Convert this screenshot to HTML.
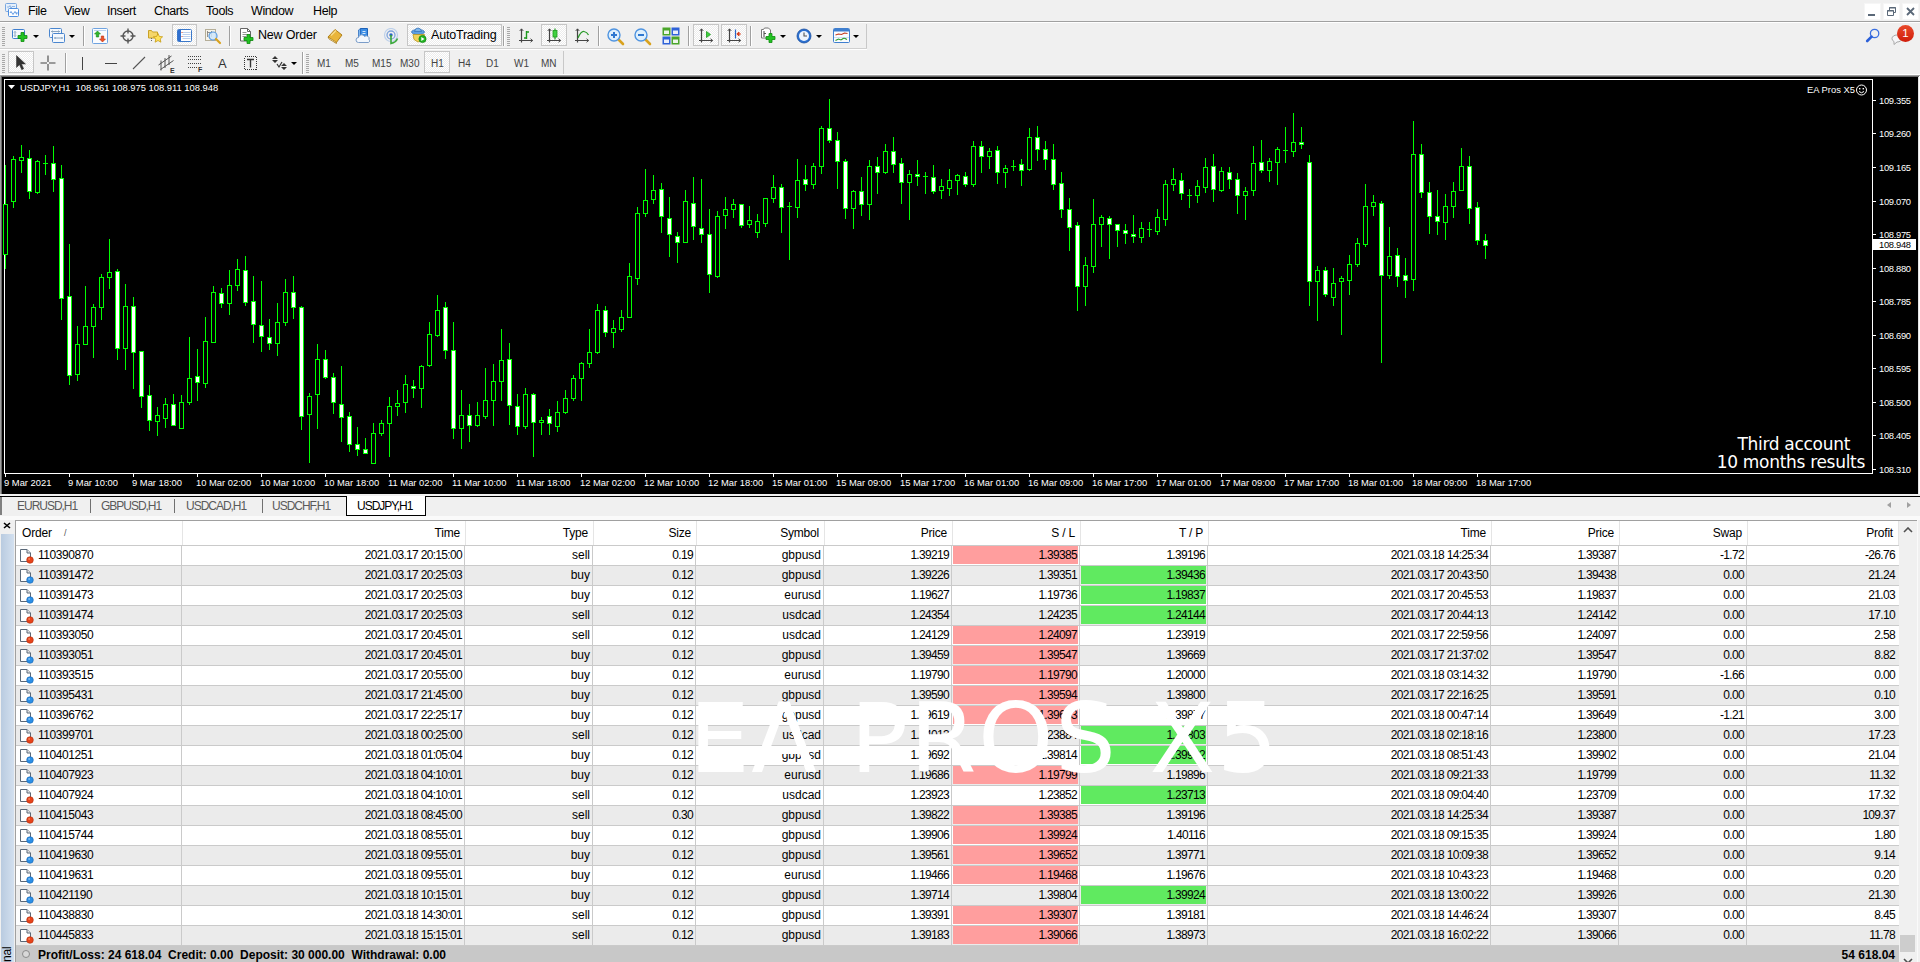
<!DOCTYPE html><html><head><meta charset="utf-8"><title>MT4</title><style>
*{box-sizing:border-box;margin:0;padding:0}
html,body{width:1920px;height:962px;overflow:hidden;background:#f0f0f0}
body{position:relative;font-family:"Liberation Sans",sans-serif;font-size:12px;color:#000}
.abs{position:absolute}
#menu{position:absolute;left:0;top:0;width:1920px;height:22px;background:#f0f0f0}
#menu span{position:absolute;top:4px;font-size:12.5px;letter-spacing:-0.4px;line-height:15px;white-space:nowrap}
.hl{position:absolute;left:0;width:1920px;height:1px}
.vsep{position:absolute;width:1px;background:#a0a0a0}
.grip{position:absolute;width:3px;height:19px;background:repeating-linear-gradient(to bottom,#a8a8a8 0,#a8a8a8 1px,transparent 1px,transparent 2px)}
.pressed{position:absolute;border:1px solid #c6c6c6;background-color:#f8f8f8;background-image:repeating-conic-gradient(#fff 0 25%,#ececec 0 50%);background-size:2px 2px}
.tbtxt{position:absolute;font-size:12.5px;letter-spacing:-0.2px;white-space:nowrap;line-height:15px}
.tf{position:absolute;top:58px;font-size:10px;color:#444;letter-spacing:0;white-space:nowrap;line-height:12px}
.dd{position:absolute;width:0;height:0;border-left:3px solid transparent;border-right:3px solid transparent;border-top:3px solid #000}
#chart{position:absolute;left:2px;top:77px;width:1916px;height:417px;background:#000}
#tabs{position:absolute;left:0;top:495px;width:1920px;height:25px;background:#f0f0f0}
.tab{position:absolute;top:4px;font-size:12px;letter-spacing:-1.02px;color:#5a5a5a;white-space:nowrap;line-height:14px}
#tbl{position:absolute;left:15px;top:520px;width:1884px;height:442px;background:#fff;border-left:1px solid #a0a0a0;border-top:1px solid #a0a0a0;overflow:hidden}
.row{position:absolute;left:0;width:1883px;height:20px;border-bottom:1px solid #cacaca}
.row.alt{background:#ebebeb}
.c{position:absolute;top:0;height:19px;line-height:18px;font-size:12px;letter-spacing:-0.68px;text-align:right;padding-right:2px;white-space:nowrap;border-right:1px solid #cacaca}
.c.t{letter-spacing:0}
.hd .c{height:24px;line-height:25px;padding-right:5px;letter-spacing:-0.2px;border-right:1px solid #e5e5e5}
.red{background:#ff9e9e;box-shadow:inset 0 0 0 1px #fff0}
.grn{background:#60ea60}
</style></head><body>
<div id="menu">
<div class="abs" style="left:4px;top:2px;width:16px;height:16px"><svg width="16" height="16" viewBox="0 0 16 16"><rect x="1.5" y="1.5" width="11" height="8" rx="1" fill="#e6f0fb" stroke="#7aa7df"/><path d="M3 5h2l1-1.500 1 3 1-2h3" stroke="#7aa7df" fill="none" stroke-width="0.8"/><rect x="4.500" y="6.500" width="10" height="8" rx="1" fill="#fdfeff" stroke="#4f8fe0"/><path d="M6 11q1-3 2 0t2 0 2 0 1-1" stroke="#4f8fe0" fill="none" stroke-width="0.9"/></svg></div>
<span style="left:28px">File</span>
<span style="left:64px">View</span>
<span style="left:107px">Insert</span>
<span style="left:154px">Charts</span>
<span style="left:206px">Tools</span>
<span style="left:251px">Window</span>
<span style="left:313px">Help</span>
<div class="abs" style="left:1864px;top:3px;width:17px;height:17px;background:#fff;border:1px solid #f6f6f6"></div><div class="abs" style="left:1883px;top:3px;width:17px;height:17px;background:#fff;border:1px solid #f6f6f6"></div><div class="abs" style="left:1902px;top:3px;width:17px;height:17px;background:#fff;border:1px solid #f6f6f6"></div><div class="abs" style="left:1868px;top:14px;width:7px;height:2px;background:#5a6878"></div><svg class="abs" style="left:1886px;top:6px" width="12" height="12" viewBox="0 0 12 12"><path d="M3.500 1.500h6v5h-6z" fill="none" stroke="#5a6878"/><path d="M3 2h7" stroke="#5a6878"/><path d="M1.500 4.500h6v5h-6z" fill="#fdfdfd" stroke="#5a6878"/><path d="M1 5h7" stroke="#5a6878"/></svg><svg class="abs" style="left:1906px;top:7px" width="9" height="9" viewBox="0 0 9 9"><path d="M1 1l7 7M8 1L1 8" stroke="#5a6878" stroke-width="1.800" fill="none"/></svg>
</div>
<div class="hl" style="top:21px;background:#a0a0a0"></div><div class="hl" style="top:22px;background:#fff"></div>
<div class="grip" style="left:2px;top:27px"></div><svg class="abs" style="left:11px;top:27px" width="18" height="18" viewBox="0 0 18 18"><rect x="1.500" y="2.500" width="12" height="9" rx="1" fill="#f4f8fd" stroke="#3f7fcf"/><path d="M4 4.500v5M3 5.500l1-1 1 1M3 8.500l1 1 1-1" stroke="#6f8fb0" fill="none" stroke-width="0.800"/><path d="M7 8.5h3v-3h3v3h3v3h-3v3h-3v-3h-3z" fill="#22c322" stroke="#0e8a0e" stroke-width="0.800"/></svg><div class="dd" style="left:33px;top:35px"></div><svg class="abs" style="left:48px;top:27px" width="18" height="18" viewBox="0 0 18 18"><rect x="1.500" y="1.500" width="12" height="9" rx="1" fill="#f4f8fd" stroke="#4a86cf"/><path d="M3.500 4.500h8M4.500 3.500l-1 1 1 1M10.500 3.500l1 1-1 1" stroke="#6f8fb0" fill="none" stroke-width="0.800"/><rect x="4.500" y="6.500" width="12" height="9" rx="1" fill="#f4f8fd" stroke="#4a86cf"/><path d="M6.500 11h8M7.500 10l-1 1 1 1M13.500 10l1 1-1 1" stroke="#6f8fb0" fill="none" stroke-width="0.800"/></svg><div class="dd" style="left:69px;top:35px"></div><div class="vsep" style="left:83px;top:26px;height:20px"></div><div class="vsep" style="left:84px;top:26px;height:20px;background:#fff"></div><svg class="abs" style="left:92px;top:28px" width="16" height="16" viewBox="0 0 16 16"><rect x="0.500" y="0.500" width="15" height="15" rx="1" fill="#fafcff" stroke="#6fa3e0"/><path d="M2 2.500h12" stroke="#bcd3ee"/><path d="M5.500 3l3 3h-1.800v3h-2.400v-3h-1.800z" fill="#2fb52f" stroke="#148a14" stroke-width="0.600"/><path d="M10.500 14l-3-3h1.800v-3h2.400v3h1.800z" fill="#f0522a" stroke="#b8300e" stroke-width="0.600"/></svg><svg class="abs" style="left:120px;top:28px" width="16" height="16" viewBox="0 0 16 16"><circle cx="8" cy="8" r="5" fill="none" stroke="#555" stroke-width="1.400"/><path d="M8 0.500v5M8 10.500v5M0.500 8h5M10.500 8h5" stroke="#555" stroke-width="1.400"/></svg><svg class="abs" style="left:147px;top:27px" width="18" height="18" viewBox="0 0 18 18"><path d="M1.500 3.500h3l1 1.500h5v6h-9z" fill="#f5d66a" stroke="#c9a227"/><path d="M11 6.500l1.400 3 3.200 0.300-2.400 2.200 0.700 3.200-2.900-1.700-2.900 1.700 0.700-3.200-2.400-2.200 3.200-0.300z" fill="#ffe25a" stroke="#c79a12" stroke-width="0.800"/><path d="M4.500 11v4" stroke="#666" stroke-dasharray="1 1"/></svg><div class="pressed" style="left:172px;top:24px;width:25px;height:22px"></div><svg class="abs" style="left:176px;top:28px" width="17" height="16" viewBox="0 0 17 16"><rect x="1.500" y="1.500" width="14" height="12" rx="1" fill="#fff" stroke="#3b78c9"/><rect x="2" y="2" width="3" height="11" fill="#2f6fd0"/><path d="M6.500 4.500h8M6.500 6.500h8M6.500 8.500h8M6.500 10.500h8" stroke="#a9c4ea" stroke-width="0.800"/><path d="M5.500 4.500h1M5.500 8.500h1" stroke="#e04a2a"/></svg><svg class="abs" style="left:204px;top:28px" width="18" height="18" viewBox="0 0 18 18"><rect x="1.500" y="1.500" width="10" height="11" fill="#f7f4ea" stroke="#b5ae98"/><path d="M3.500 3v6M7.500 3v6M3.500 4.500h4" stroke="#777" stroke-width="0.800"/><circle cx="9" cy="8" r="4" fill="#cfe6fb" fill-opacity="0.850" stroke="#5b9be0" stroke-width="1.200"/><path d="M12 11l4 4" stroke="#d9a21e" stroke-width="2.200" stroke-linecap="round"/></svg><div class="vsep" style="left:229px;top:26px;height:20px"></div><div class="vsep" style="left:230px;top:26px;height:20px;background:#fff"></div><svg class="abs" style="left:239px;top:27px" width="17" height="18" viewBox="0 0 17 18"><path d="M1.500 1.500h7l3 3v9.500h-10z" fill="#fff" stroke="#666"/><path d="M8.500 1.500v3h3" fill="none" stroke="#666"/><path d="M3.500 5.500h4M3.500 7.500h6M3.500 9.500h4" stroke="#888" stroke-width="0.900"/><path d="M5 10.5h3v-3h3v3h3v3h-3v3h-3v-3h-3z" fill="#22c322" stroke="#0e8a0e" stroke-width="0.800"/></svg><span class="tbtxt" style="left:258px;top:28px">New Order</span><svg class="abs" style="left:327px;top:28px" width="16" height="17" viewBox="0 0 16 17"><path d="M1 9l7-7.500 7 5.500-6 8z" fill="#e9b53a" stroke="#a8770f" stroke-width="0.900"/><path d="M1 9l1 2 7.500 4.500-0.500-1.500z" fill="#fff6d8" stroke="#a8770f" stroke-width="0.700"/><path d="M4 7.500l5-5" stroke="#f8dc8a" stroke-width="1.500"/></svg><svg class="abs" style="left:355px;top:27px" width="17" height="17" viewBox="0 0 17 17"><path d="M5.500 1.500h7v9h-7z" fill="#3c8ee6" stroke="#1e62b8"/><path d="M5.500 1.500l-2 1.500v8l2-0.500z" fill="#7db7f2" stroke="#1e62b8" stroke-width="0.700"/><path d="M7.500 4.500h3M7.500 6.500h3" stroke="#cfe5fb"/><path d="M3.500 15.500a2.500 2.500 0 0 1 0-5 3.200 3.200 0 0 1 6-1 2.800 2.800 0 0 1 4.500 3 1.800 1.800 0 0 1-0.500 3z" fill="#f2f7fd" stroke="#7a9cc8"/></svg><svg class="abs" style="left:383px;top:28px" width="16" height="17" viewBox="0 0 16 17"><circle cx="8" cy="7" r="6.500" fill="none" stroke="#bcd0ea" stroke-width="1.200"/><circle cx="8" cy="7" r="4" fill="none" stroke="#7fa4dc" stroke-width="1.300"/><circle cx="8" cy="7" r="1.700" fill="#2a64c8"/><path d="M8 7v8.500q5-1 6.500-5" stroke="#3aa83a" stroke-width="1.600" fill="none"/></svg><div class="pressed" style="left:407px;top:24px;width:95px;height:22px"></div><svg class="abs" style="left:411px;top:27px" width="17" height="17" viewBox="0 0 17 17"><ellipse cx="7" cy="5" rx="6.500" ry="2.600" fill="#5fa0e0" stroke="#2f6db5" stroke-width="0.700"/><path d="M3.500 4.500q0.500-3.500 3.500-3.500t3.500 3.500z" fill="#7db5ea" stroke="#2f6db5" stroke-width="0.700"/><path d="M2 7.500l1 5 4 2.500 5-2 1.500-5.500z" fill="#f2d35a" stroke="#b8941e" stroke-width="0.800"/><circle cx="11.500" cy="12" r="3.600" fill="#22b422" stroke="#0e7f0e" stroke-width="0.700"/><path d="M10.300 10l3.200 2-3.200 2z" fill="#fff"/></svg><span class="tbtxt" style="left:431px;top:28px">AutoTrading</span><div class="vsep" style="left:503px;top:26px;height:20px"></div><div class="vsep" style="left:504px;top:26px;height:20px;background:#fff"></div><div class="grip" style="left:507px;top:27px"></div><svg class="abs" style="left:518px;top:28px" width="16" height="16" viewBox="0 0 16 16"><path d="M3.500 1v13.500M1 12.500h13.500" stroke="#444" stroke-width="1.200" fill="none"/><path d="M1.700 3l1.800-2.200 1.800 2.200M12.500 10.700l2.200 1.800-2.200 1.800" stroke="#444" fill="none" stroke-width="0.900"/><path d="M8.500 3v8M8.500 4h2.500M6 10h2.500" stroke="#1e9a1e" stroke-width="1.400" fill="none"/></svg><div class="pressed" style="left:541px;top:24px;width:26px;height:22px"></div><svg class="abs" style="left:546px;top:28px" width="16" height="16" viewBox="0 0 16 16"><path d="M3.500 1v13.500M1 12.500h13.500" stroke="#444" stroke-width="1.200" fill="none"/><path d="M1.700 3l1.800-2.200 1.800 2.200M12.500 10.700l2.200 1.800-2.200 1.800" stroke="#444" fill="none" stroke-width="0.900"/><path d="M9 0.500v11" stroke="#1e9a1e" stroke-width="1.200"/><rect x="7" y="2.500" width="4" height="6.500" fill="#3fd23f" stroke="#1e9a1e" stroke-width="0.800"/></svg><svg class="abs" style="left:574px;top:28px" width="16" height="16" viewBox="0 0 16 16"><path d="M3.500 1v13.500M1 12.500h13.500" stroke="#444" stroke-width="1.200" fill="none"/><path d="M1.700 3l1.800-2.200 1.800 2.200M12.500 10.700l2.200 1.800-2.200 1.800" stroke="#444" fill="none" stroke-width="0.900"/><path d="M4 10q3-7 6-6.500t4.500 3.500" stroke="#2a9a2a" stroke-width="1.200" fill="none"/></svg><div class="vsep" style="left:598px;top:26px;height:20px"></div><div class="vsep" style="left:599px;top:26px;height:20px;background:#fff"></div><svg class="abs" style="left:606px;top:27px" width="19" height="19" viewBox="0 0 19 19"><path d="M12 12l5 5" stroke="#d9a21e" stroke-width="2.600" stroke-linecap="round"/><circle cx="8" cy="8" r="6" fill="#dff0fd" stroke="#4f94e0" stroke-width="1.400"/><path d="M5 8h6" stroke="#2f78d0" stroke-width="2"/><path d="M8 5v6" stroke="#2f78d0" stroke-width="2"/></svg><svg class="abs" style="left:633px;top:27px" width="19" height="19" viewBox="0 0 19 19"><path d="M12 12l5 5" stroke="#d9a21e" stroke-width="2.600" stroke-linecap="round"/><circle cx="8" cy="8" r="6" fill="#dff0fd" stroke="#4f94e0" stroke-width="1.400"/><path d="M5 8h6" stroke="#2f78d0" stroke-width="2"/></svg><svg class="abs" style="left:662px;top:27px" width="18" height="18" viewBox="0 0 18 18"><rect x="0.500" y="0.500" width="8" height="8" fill="#4aa52a"/><rect x="9.500" y="0.500" width="8" height="8" fill="#2f62d8"/><rect x="0.500" y="9.500" width="8" height="8" fill="#2f62d8"/><rect x="9.500" y="9.500" width="8" height="8" fill="#4aa52a"/><g fill="#fff" opacity="0.9"><rect x="2" y="3.500" width="5" height="3.500"/><rect x="11" y="3.500" width="5" height="3.500"/><rect x="2" y="12.500" width="5" height="3.500"/><rect x="11" y="12.500" width="5" height="3.500"/></g></svg><div class="vsep" style="left:688px;top:26px;height:20px"></div><div class="vsep" style="left:689px;top:26px;height:20px;background:#fff"></div><div class="pressed" style="left:693px;top:24px;width:26px;height:22px"></div><svg class="abs" style="left:698px;top:28px" width="16" height="16" viewBox="0 0 16 16"><path d="M3.500 1v13.500M1 12.500h13.500" stroke="#444" stroke-width="1.200" fill="none"/><path d="M1.700 3l1.800-2.200 1.800 2.200M12.500 10.700l2.200 1.800-2.200 1.800" stroke="#444" fill="none" stroke-width="0.900"/><path d="M8.500 3.500l4 3-4 3z" fill="#3fd23f" stroke="#1e9a1e" stroke-width="0.800"/></svg><div class="pressed" style="left:721px;top:24px;width:26px;height:22px"></div><svg class="abs" style="left:726px;top:28px" width="16" height="16" viewBox="0 0 16 16"><path d="M3.500 1v13.500M1 12.500h13.500" stroke="#444" stroke-width="1.200" fill="none"/><path d="M1.700 3l1.800-2.200 1.800 2.200M12.500 10.700l2.200 1.800-2.200 1.800" stroke="#444" fill="none" stroke-width="0.900"/><path d="M9.500 1.500v9" stroke="#2a64c8" stroke-width="1.200"/><path d="M15 6h-4M13 4l-2.200 2 2.200 2z" stroke="#d8401e" fill="#d8401e" stroke-width="0.900"/></svg><div class="vsep" style="left:750px;top:26px;height:20px"></div><div class="vsep" style="left:751px;top:26px;height:20px;background:#fff"></div><svg class="abs" style="left:760px;top:27px" width="17" height="18" viewBox="0 0 17 18"><path d="M1.500 2.500h2l1-1.500h4l2 2v8h-9z" fill="#fff" stroke="#777"/><path d="M4 4v6M4 6.500h2" stroke="#555" stroke-width="1.100" fill="none"/><path d="M6 9.5h3v-3h3v3h3v3h-3v3h-3v-3h-3z" fill="#22c322" stroke="#0e8a0e" stroke-width="0.800"/></svg><div class="dd" style="left:780px;top:35px"></div><svg class="abs" style="left:796px;top:28px" width="16" height="16" viewBox="0 0 16 16"><circle cx="8" cy="8" r="7" fill="#2a6fd0" stroke="#1a4fa0" stroke-width="0.800"/><circle cx="8" cy="8" r="5" fill="#eef5fd"/><path d="M8 4.500v3.500h3" stroke="#555" stroke-width="1.100" fill="none"/></svg><div class="dd" style="left:816px;top:35px"></div><svg class="abs" style="left:833px;top:28px" width="17" height="16" viewBox="0 0 17 16"><rect x="0.500" y="0.500" width="16" height="14" rx="1" fill="#fafcff" stroke="#3f7fcf"/><rect x="1" y="1" width="15" height="2.500" fill="#3f7fcf"/><path d="M2.500 7l3-1 3 0.500 3-1.500 3 0.500" stroke="#c23a1e" fill="none" stroke-width="1.100"/><path d="M2.500 12.500l3-1.500 2.500 1 3-2 3 1.500" stroke="#2a9a2a" fill="none" stroke-width="1.100"/><path d="M1 9.500h15" stroke="#bcd3ee" stroke-width="0.700"/></svg><div class="dd" style="left:853px;top:35px"></div><div class="abs" style="left:866px;top:24px;width:1px;height:24px;background:#c8c8c8"></div><svg class="abs" style="left:1865px;top:27px" width="16" height="16" viewBox="0 0 16 16"><circle cx="9.600" cy="6.500" r="4.200" fill="none" stroke="#3a6fe0" stroke-width="1.300"/><path d="M6.600 9.600l-4.400 4.400" stroke="#2a5fd8" stroke-width="2.600" stroke-linecap="round"/></svg><svg class="abs" style="left:1890px;top:30px" width="16" height="16" viewBox="0 0 16 16"><path d="M2 8.500a5 3.500 0 0 1 10 0a5 3.500 0 0 1-5 3.500l-3 2.500v-3a5 3.500 0 0 1-2-3z" fill="#f6f6f8" stroke="#a8a8a8" stroke-width="1"/></svg><div class="abs" style="left:1897px;top:25px;width:17px;height:17px;border-radius:50%;background:linear-gradient(#e94a2c,#d01c0a);color:#fff;font-size:11.5px;line-height:17px;text-align:center">1</div>
<div class="hl" style="top:48px;width:867px;background:#d0d0d0"></div><div class="hl" style="top:49px;width:867px;background:#fff"></div>
<div class="grip" style="left:2px;top:54px"></div><div class="pressed" style="left:8px;top:51px;width:26px;height:22px"></div><svg class="abs" style="left:15px;top:55px" width="12" height="16" viewBox="0 0 12 16"><path d="M1.500 0.500v12l3-2.800 2.200 5 2-0.900-2.200-4.800h4z" fill="#333" stroke="#333" stroke-width="0.500"/></svg><svg class="abs" style="left:40px;top:55px" width="16" height="16" viewBox="0 0 16 16"><path d="M8 0.500v15M0.500 8h15" stroke="#444" stroke-width="1.100"/><rect x="7" y="7" width="2" height="2" fill="#f0f0f0"/></svg><div class="vsep" style="left:65px;top:53px;height:20px"></div><div class="vsep" style="left:66px;top:53px;height:20px;background:#fff"></div><div class="abs" style="left:82px;top:57px;width:1px;height:13px;background:#444"></div><div class="abs" style="left:105px;top:63px;width:12px;height:1px;background:#444"></div><svg class="abs" style="left:132px;top:56px" width="14" height="14" viewBox="0 0 14 14"><path d="M1 13L13 1" stroke="#555" stroke-width="1.100"/></svg><svg class="abs" style="left:157px;top:54px" width="20" height="20" viewBox="0 0 20 20"><path d="M1.500 11l13-9M3.500 15.500l13-9M4 6.500v10M8 4v10M12 1v10" stroke="#444" stroke-width="0.900" fill="none"/><text x="13" y="19" font-size="7" font-family="Liberation Sans, sans-serif" font-weight="bold" fill="#333">E</text></svg><svg class="abs" style="left:186px;top:55px" width="20" height="20" viewBox="0 0 20 20"><path d="M1.500 1.500h13M1.500 4.500h13M1.500 8.500h13M1.500 12.500h9" stroke="#444" stroke-width="1" stroke-dasharray="1 1" fill="none" shape-rendering="crispEdges"/><text x="12" y="17" font-size="7" font-family="Liberation Sans, sans-serif" font-weight="bold" fill="#333">F</text></svg><span class="abs" style="left:218px;top:56px;font-size:13px;line-height:15px;color:#333">A</span><svg class="abs" style="left:243px;top:55px" width="16" height="16" viewBox="0 0 16 16"><rect x="1.500" y="1.500" width="12" height="13" fill="none" stroke="#333" stroke-dasharray="1 1" shape-rendering="crispEdges"/><path d="M4 4.500h7M7.500 4.500v8" stroke="#333" stroke-width="1.400"/></svg><svg class="abs" style="left:271px;top:55px" width="18" height="16" viewBox="0 0 18 16"><path d="M4 1l3 3h-6zM4 8l-3-3h6z" fill="#333"/><path d="M13 8l3 3h-6zM13 15l-3-3h6z" fill="#333"/><path d="M6 9l2 3 3-5" stroke="#333" fill="none" stroke-width="1.200"/></svg><div class="dd" style="left:291px;top:62px"></div><div class="vsep" style="left:302px;top:52px;height:23px"></div><div class="vsep" style="left:303px;top:52px;height:23px;background:#fff"></div><div class="grip" style="left:306px;top:54px"></div><span class="tf" style="left:317px">M1</span><span class="tf" style="left:345px">M5</span><span class="tf" style="left:372px">M15</span><span class="tf" style="left:400px">M30</span><div class="pressed" style="left:424px;top:51px;width:26px;height:22px"></div><span class="tf" style="left:431px">H1</span><span class="tf" style="left:458px">H4</span><span class="tf" style="left:486px">D1</span><span class="tf" style="left:514px">W1</span><span class="tf" style="left:541px">MN</span><div class="abs" style="left:563px;top:51px;width:1px;height:24px;background:#c8c8c8"></div>
<div class="hl" style="top:74px;background:#fff"></div><div class="hl" style="top:75px;background:#a0a0a0"></div><div class="hl" style="top:76px;background:#696969"></div>
<div class="abs" style="left:0;top:76px;width:1px;height:419px;background:#a0a0a0"></div><div class="abs" style="left:1px;top:77px;width:1px;height:417px;background:#696969"></div>
<div class="abs" style="left:1918px;top:77px;width:1px;height:418px;background:#e3e3e3"></div><div class="abs" style="left:1919px;top:76px;width:1px;height:419px;background:#fff"></div>
<div id="chart">
<svg width="1916" height="417" viewBox="2 77 1916 417" shape-rendering="crispEdges" style="position:absolute;left:0;top:0"><g fill="#fff"><rect x="4" y="79" width="1869" height="1"/><rect x="4" y="79" width="1" height="395"/><rect x="1872" y="79" width="1" height="395"/><rect x="4" y="473" width="1869" height="1"/><rect x="5" y="474" width="1" height="3"/><rect x="69" y="474" width="1" height="3"/><rect x="133" y="474" width="1" height="3"/><rect x="197" y="474" width="1" height="3"/><rect x="261" y="474" width="1" height="3"/><rect x="325" y="474" width="1" height="3"/><rect x="389" y="474" width="1" height="3"/><rect x="453" y="474" width="1" height="3"/><rect x="517" y="474" width="1" height="3"/><rect x="581" y="474" width="1" height="3"/><rect x="645" y="474" width="1" height="3"/><rect x="709" y="474" width="1" height="3"/><rect x="773" y="474" width="1" height="3"/><rect x="837" y="474" width="1" height="3"/><rect x="901" y="474" width="1" height="3"/><rect x="965" y="474" width="1" height="3"/><rect x="1029" y="474" width="1" height="3"/><rect x="1093" y="474" width="1" height="3"/><rect x="1157" y="474" width="1" height="3"/><rect x="1221" y="474" width="1" height="3"/><rect x="1285" y="474" width="1" height="3"/><rect x="1349" y="474" width="1" height="3"/><rect x="1413" y="474" width="1" height="3"/><rect x="1477" y="474" width="1" height="3"/><rect x="1873" y="100" width="3" height="1"/><rect x="1873" y="133" width="3" height="1"/><rect x="1873" y="167" width="3" height="1"/><rect x="1873" y="201" width="3" height="1"/><rect x="1873" y="234" width="3" height="1"/><rect x="1873" y="268" width="3" height="1"/><rect x="1873" y="301" width="3" height="1"/><rect x="1873" y="335" width="3" height="1"/><rect x="1873" y="368" width="3" height="1"/><rect x="1873" y="402" width="3" height="1"/><rect x="1873" y="435" width="3" height="1"/><rect x="1873" y="469" width="3" height="1"/></g><rect x="5" y="165" width="1" height="104" fill="#00ff00"/><rect x="3" y="204" width="5" height="51" fill="#00ff00"/><rect x="4" y="205" width="3" height="49" fill="#000"/><rect x="13" y="156" width="1" height="52" fill="#00ff00"/><rect x="11" y="159" width="5" height="43" fill="#00ff00"/><rect x="12" y="160" width="3" height="41" fill="#000"/><rect x="21" y="145" width="1" height="28" fill="#00ff00"/><rect x="19" y="157" width="5" height="4" fill="#00ff00"/><rect x="20" y="158" width="3" height="2" fill="#000"/><rect x="29" y="150" width="1" height="49" fill="#00ff00"/><rect x="27" y="158" width="5" height="34" fill="#00ff00"/><rect x="28" y="159" width="3" height="32" fill="#fff"/><rect x="37" y="160" width="1" height="34" fill="#00ff00"/><rect x="35" y="161" width="5" height="32" fill="#00ff00"/><rect x="36" y="162" width="3" height="30" fill="#000"/><rect x="45" y="155" width="1" height="20" fill="#00ff00"/><rect x="43" y="163" width="5" height="1" fill="#00ff00"/><rect x="53" y="146" width="1" height="46" fill="#00ff00"/><rect x="51" y="163" width="5" height="17" fill="#00ff00"/><rect x="52" y="164" width="3" height="15" fill="#fff"/><rect x="61" y="165" width="1" height="155" fill="#00ff00"/><rect x="59" y="178" width="5" height="121" fill="#00ff00"/><rect x="60" y="179" width="3" height="119" fill="#fff"/><rect x="69" y="244" width="1" height="141" fill="#00ff00"/><rect x="67" y="296" width="5" height="80" fill="#00ff00"/><rect x="68" y="297" width="3" height="78" fill="#fff"/><rect x="77" y="326" width="1" height="55" fill="#00ff00"/><rect x="75" y="344" width="5" height="31" fill="#00ff00"/><rect x="76" y="345" width="3" height="29" fill="#000"/><rect x="85" y="286" width="1" height="59" fill="#00ff00"/><rect x="83" y="326" width="5" height="19" fill="#00ff00"/><rect x="84" y="327" width="3" height="17" fill="#000"/><rect x="93" y="304" width="1" height="54" fill="#00ff00"/><rect x="91" y="307" width="5" height="20" fill="#00ff00"/><rect x="92" y="308" width="3" height="18" fill="#000"/><rect x="101" y="274" width="1" height="46" fill="#00ff00"/><rect x="99" y="277" width="5" height="31" fill="#00ff00"/><rect x="100" y="278" width="3" height="29" fill="#000"/><rect x="109" y="239" width="1" height="50" fill="#00ff00"/><rect x="107" y="272" width="5" height="6" fill="#00ff00"/><rect x="108" y="273" width="3" height="4" fill="#000"/><rect x="117" y="269" width="1" height="91" fill="#00ff00"/><rect x="115" y="271" width="5" height="78" fill="#00ff00"/><rect x="116" y="272" width="3" height="76" fill="#fff"/><rect x="125" y="284" width="1" height="86" fill="#00ff00"/><rect x="123" y="306" width="5" height="43" fill="#00ff00"/><rect x="124" y="307" width="3" height="41" fill="#000"/><rect x="133" y="297" width="1" height="92" fill="#00ff00"/><rect x="131" y="306" width="5" height="47" fill="#00ff00"/><rect x="132" y="307" width="3" height="45" fill="#fff"/><rect x="141" y="351" width="1" height="57" fill="#00ff00"/><rect x="139" y="351" width="5" height="46" fill="#00ff00"/><rect x="140" y="352" width="3" height="44" fill="#fff"/><rect x="149" y="385" width="1" height="46" fill="#00ff00"/><rect x="147" y="395" width="5" height="26" fill="#00ff00"/><rect x="148" y="396" width="3" height="24" fill="#fff"/><rect x="157" y="407" width="1" height="29" fill="#00ff00"/><rect x="155" y="415" width="5" height="7" fill="#00ff00"/><rect x="156" y="416" width="3" height="5" fill="#000"/><rect x="165" y="398" width="1" height="30" fill="#00ff00"/><rect x="163" y="404" width="5" height="15" fill="#00ff00"/><rect x="164" y="405" width="3" height="13" fill="#000"/><rect x="173" y="394" width="1" height="32" fill="#00ff00"/><rect x="171" y="404" width="5" height="22" fill="#00ff00"/><rect x="172" y="405" width="3" height="20" fill="#fff"/><rect x="181" y="395" width="1" height="34" fill="#00ff00"/><rect x="179" y="402" width="5" height="27" fill="#00ff00"/><rect x="180" y="403" width="3" height="25" fill="#000"/><rect x="189" y="337" width="1" height="68" fill="#00ff00"/><rect x="187" y="378" width="5" height="25" fill="#00ff00"/><rect x="188" y="379" width="3" height="23" fill="#000"/><rect x="197" y="349" width="1" height="52" fill="#00ff00"/><rect x="195" y="376" width="5" height="7" fill="#00ff00"/><rect x="196" y="377" width="3" height="5" fill="#fff"/><rect x="205" y="317" width="1" height="71" fill="#00ff00"/><rect x="203" y="341" width="5" height="43" fill="#00ff00"/><rect x="204" y="342" width="3" height="41" fill="#000"/><rect x="213" y="286" width="1" height="57" fill="#00ff00"/><rect x="211" y="292" width="5" height="51" fill="#00ff00"/><rect x="212" y="293" width="3" height="49" fill="#000"/><rect x="221" y="288" width="1" height="20" fill="#00ff00"/><rect x="219" y="293" width="5" height="11" fill="#00ff00"/><rect x="220" y="294" width="3" height="9" fill="#fff"/><rect x="229" y="270" width="1" height="45" fill="#00ff00"/><rect x="227" y="285" width="5" height="19" fill="#00ff00"/><rect x="228" y="286" width="3" height="17" fill="#000"/><rect x="237" y="259" width="1" height="32" fill="#00ff00"/><rect x="235" y="269" width="5" height="17" fill="#00ff00"/><rect x="236" y="270" width="3" height="15" fill="#000"/><rect x="245" y="256" width="1" height="50" fill="#00ff00"/><rect x="243" y="270" width="5" height="33" fill="#00ff00"/><rect x="244" y="271" width="3" height="31" fill="#fff"/><rect x="253" y="276" width="1" height="67" fill="#00ff00"/><rect x="251" y="301" width="5" height="24" fill="#00ff00"/><rect x="252" y="302" width="3" height="22" fill="#fff"/><rect x="261" y="281" width="1" height="71" fill="#00ff00"/><rect x="259" y="325" width="5" height="12" fill="#00ff00"/><rect x="260" y="326" width="3" height="10" fill="#fff"/><rect x="269" y="319" width="1" height="31" fill="#00ff00"/><rect x="267" y="337" width="5" height="7" fill="#00ff00"/><rect x="268" y="338" width="3" height="5" fill="#fff"/><rect x="277" y="303" width="1" height="53" fill="#00ff00"/><rect x="275" y="322" width="5" height="22" fill="#00ff00"/><rect x="276" y="323" width="3" height="20" fill="#000"/><rect x="285" y="279" width="1" height="47" fill="#00ff00"/><rect x="283" y="292" width="5" height="31" fill="#00ff00"/><rect x="284" y="293" width="3" height="29" fill="#000"/><rect x="293" y="276" width="1" height="43" fill="#00ff00"/><rect x="291" y="292" width="5" height="16" fill="#00ff00"/><rect x="292" y="293" width="3" height="14" fill="#fff"/><rect x="301" y="306" width="1" height="124" fill="#00ff00"/><rect x="299" y="307" width="5" height="110" fill="#00ff00"/><rect x="300" y="308" width="3" height="108" fill="#fff"/><rect x="309" y="393" width="1" height="70" fill="#00ff00"/><rect x="307" y="396" width="5" height="19" fill="#00ff00"/><rect x="308" y="397" width="3" height="17" fill="#000"/><rect x="317" y="344" width="1" height="85" fill="#00ff00"/><rect x="315" y="359" width="5" height="36" fill="#00ff00"/><rect x="316" y="360" width="3" height="34" fill="#000"/><rect x="325" y="350" width="1" height="29" fill="#00ff00"/><rect x="323" y="359" width="5" height="19" fill="#00ff00"/><rect x="324" y="360" width="3" height="17" fill="#fff"/><rect x="333" y="373" width="1" height="41" fill="#00ff00"/><rect x="331" y="377" width="5" height="26" fill="#00ff00"/><rect x="332" y="378" width="3" height="24" fill="#fff"/><rect x="341" y="366" width="1" height="76" fill="#00ff00"/><rect x="339" y="404" width="5" height="14" fill="#00ff00"/><rect x="340" y="405" width="3" height="12" fill="#fff"/><rect x="349" y="412" width="1" height="40" fill="#00ff00"/><rect x="347" y="416" width="5" height="29" fill="#00ff00"/><rect x="348" y="417" width="3" height="27" fill="#fff"/><rect x="357" y="427" width="1" height="29" fill="#00ff00"/><rect x="355" y="444" width="5" height="6" fill="#00ff00"/><rect x="356" y="445" width="3" height="4" fill="#fff"/><rect x="365" y="438" width="1" height="16" fill="#00ff00"/><rect x="363" y="449" width="5" height="5" fill="#00ff00"/><rect x="364" y="450" width="3" height="3" fill="#fff"/><rect x="373" y="423" width="1" height="41" fill="#00ff00"/><rect x="371" y="433" width="5" height="31" fill="#00ff00"/><rect x="372" y="434" width="3" height="29" fill="#000"/><rect x="381" y="420" width="1" height="16" fill="#00ff00"/><rect x="379" y="423" width="5" height="11" fill="#00ff00"/><rect x="380" y="424" width="3" height="9" fill="#000"/><rect x="389" y="397" width="1" height="60" fill="#00ff00"/><rect x="387" y="406" width="5" height="18" fill="#00ff00"/><rect x="388" y="407" width="3" height="16" fill="#000"/><rect x="397" y="390" width="1" height="26" fill="#00ff00"/><rect x="395" y="403" width="5" height="4" fill="#00ff00"/><rect x="396" y="404" width="3" height="2" fill="#000"/><rect x="405" y="375" width="1" height="38" fill="#00ff00"/><rect x="403" y="384" width="5" height="19" fill="#00ff00"/><rect x="404" y="385" width="3" height="17" fill="#000"/><rect x="413" y="380" width="1" height="18" fill="#00ff00"/><rect x="411" y="386" width="5" height="3" fill="#00ff00"/><rect x="412" y="387" width="3" height="1" fill="#fff"/><rect x="421" y="365" width="1" height="43" fill="#00ff00"/><rect x="419" y="366" width="5" height="23" fill="#00ff00"/><rect x="420" y="367" width="3" height="21" fill="#000"/><rect x="429" y="322" width="1" height="45" fill="#00ff00"/><rect x="427" y="334" width="5" height="32" fill="#00ff00"/><rect x="428" y="335" width="3" height="30" fill="#000"/><rect x="437" y="295" width="1" height="42" fill="#00ff00"/><rect x="435" y="310" width="5" height="26" fill="#00ff00"/><rect x="436" y="311" width="3" height="24" fill="#000"/><rect x="445" y="302" width="1" height="57" fill="#00ff00"/><rect x="443" y="307" width="5" height="44" fill="#00ff00"/><rect x="444" y="308" width="3" height="42" fill="#fff"/><rect x="453" y="322" width="1" height="117" fill="#00ff00"/><rect x="451" y="350" width="5" height="79" fill="#00ff00"/><rect x="452" y="351" width="3" height="77" fill="#fff"/><rect x="461" y="390" width="1" height="59" fill="#00ff00"/><rect x="459" y="415" width="5" height="14" fill="#00ff00"/><rect x="460" y="416" width="3" height="12" fill="#000"/><rect x="469" y="404" width="1" height="38" fill="#00ff00"/><rect x="467" y="415" width="5" height="11" fill="#00ff00"/><rect x="468" y="416" width="3" height="9" fill="#fff"/><rect x="477" y="402" width="1" height="25" fill="#00ff00"/><rect x="475" y="415" width="5" height="11" fill="#00ff00"/><rect x="476" y="416" width="3" height="9" fill="#000"/><rect x="485" y="368" width="1" height="51" fill="#00ff00"/><rect x="483" y="400" width="5" height="17" fill="#00ff00"/><rect x="484" y="401" width="3" height="15" fill="#000"/><rect x="493" y="364" width="1" height="62" fill="#00ff00"/><rect x="491" y="381" width="5" height="20" fill="#00ff00"/><rect x="492" y="382" width="3" height="18" fill="#000"/><rect x="501" y="329" width="1" height="72" fill="#00ff00"/><rect x="499" y="360" width="5" height="22" fill="#00ff00"/><rect x="500" y="361" width="3" height="20" fill="#000"/><rect x="509" y="343" width="1" height="82" fill="#00ff00"/><rect x="507" y="359" width="5" height="47" fill="#00ff00"/><rect x="508" y="360" width="3" height="45" fill="#fff"/><rect x="517" y="394" width="1" height="41" fill="#00ff00"/><rect x="515" y="406" width="5" height="21" fill="#00ff00"/><rect x="516" y="407" width="3" height="19" fill="#fff"/><rect x="525" y="388" width="1" height="41" fill="#00ff00"/><rect x="523" y="394" width="5" height="33" fill="#00ff00"/><rect x="524" y="395" width="3" height="31" fill="#000"/><rect x="533" y="393" width="1" height="64" fill="#00ff00"/><rect x="531" y="394" width="5" height="29" fill="#00ff00"/><rect x="532" y="395" width="3" height="27" fill="#fff"/><rect x="541" y="417" width="1" height="18" fill="#00ff00"/><rect x="539" y="420" width="5" height="3" fill="#00ff00"/><rect x="540" y="421" width="3" height="1" fill="#000"/><rect x="549" y="409" width="1" height="26" fill="#00ff00"/><rect x="547" y="416" width="5" height="8" fill="#00ff00"/><rect x="548" y="417" width="3" height="6" fill="#fff"/><rect x="557" y="401" width="1" height="31" fill="#00ff00"/><rect x="555" y="412" width="5" height="15" fill="#00ff00"/><rect x="556" y="413" width="3" height="13" fill="#000"/><rect x="565" y="390" width="1" height="24" fill="#00ff00"/><rect x="563" y="398" width="5" height="15" fill="#00ff00"/><rect x="564" y="399" width="3" height="13" fill="#000"/><rect x="573" y="375" width="1" height="26" fill="#00ff00"/><rect x="571" y="378" width="5" height="21" fill="#00ff00"/><rect x="572" y="379" width="3" height="19" fill="#000"/><rect x="581" y="362" width="1" height="39" fill="#00ff00"/><rect x="579" y="363" width="5" height="16" fill="#00ff00"/><rect x="580" y="364" width="3" height="14" fill="#000"/><rect x="589" y="329" width="1" height="39" fill="#00ff00"/><rect x="587" y="352" width="5" height="12" fill="#00ff00"/><rect x="588" y="353" width="3" height="10" fill="#000"/><rect x="597" y="304" width="1" height="50" fill="#00ff00"/><rect x="595" y="310" width="5" height="43" fill="#00ff00"/><rect x="596" y="311" width="3" height="41" fill="#000"/><rect x="605" y="306" width="1" height="31" fill="#00ff00"/><rect x="603" y="310" width="5" height="23" fill="#00ff00"/><rect x="604" y="311" width="3" height="21" fill="#fff"/><rect x="613" y="320" width="1" height="28" fill="#00ff00"/><rect x="611" y="328" width="5" height="5" fill="#00ff00"/><rect x="612" y="329" width="3" height="3" fill="#000"/><rect x="621" y="310" width="1" height="22" fill="#00ff00"/><rect x="619" y="317" width="5" height="13" fill="#00ff00"/><rect x="620" y="318" width="3" height="11" fill="#000"/><rect x="629" y="263" width="1" height="55" fill="#00ff00"/><rect x="627" y="276" width="5" height="42" fill="#00ff00"/><rect x="628" y="277" width="3" height="40" fill="#000"/><rect x="637" y="207" width="1" height="78" fill="#00ff00"/><rect x="635" y="213" width="5" height="66" fill="#00ff00"/><rect x="636" y="214" width="3" height="64" fill="#000"/><rect x="645" y="169" width="1" height="48" fill="#00ff00"/><rect x="643" y="200" width="5" height="14" fill="#00ff00"/><rect x="644" y="201" width="3" height="12" fill="#000"/><rect x="653" y="175" width="1" height="29" fill="#00ff00"/><rect x="651" y="190" width="5" height="10" fill="#00ff00"/><rect x="652" y="191" width="3" height="8" fill="#000"/><rect x="661" y="183" width="1" height="50" fill="#00ff00"/><rect x="659" y="189" width="5" height="28" fill="#00ff00"/><rect x="660" y="190" width="3" height="26" fill="#fff"/><rect x="669" y="197" width="1" height="60" fill="#00ff00"/><rect x="667" y="218" width="5" height="17" fill="#00ff00"/><rect x="668" y="219" width="3" height="15" fill="#fff"/><rect x="677" y="232" width="1" height="31" fill="#00ff00"/><rect x="675" y="236" width="5" height="7" fill="#00ff00"/><rect x="676" y="237" width="3" height="5" fill="#fff"/><rect x="685" y="190" width="1" height="53" fill="#00ff00"/><rect x="683" y="201" width="5" height="42" fill="#00ff00"/><rect x="684" y="202" width="3" height="40" fill="#000"/><rect x="693" y="177" width="1" height="63" fill="#00ff00"/><rect x="691" y="203" width="5" height="24" fill="#00ff00"/><rect x="692" y="204" width="3" height="22" fill="#fff"/><rect x="701" y="179" width="1" height="64" fill="#00ff00"/><rect x="699" y="228" width="5" height="7" fill="#00ff00"/><rect x="700" y="229" width="3" height="5" fill="#fff"/><rect x="709" y="209" width="1" height="84" fill="#00ff00"/><rect x="707" y="234" width="5" height="41" fill="#00ff00"/><rect x="708" y="235" width="3" height="39" fill="#fff"/><rect x="717" y="211" width="1" height="67" fill="#00ff00"/><rect x="715" y="216" width="5" height="61" fill="#00ff00"/><rect x="716" y="217" width="3" height="59" fill="#000"/><rect x="725" y="197" width="1" height="32" fill="#00ff00"/><rect x="723" y="209" width="5" height="7" fill="#00ff00"/><rect x="724" y="210" width="3" height="5" fill="#000"/><rect x="733" y="199" width="1" height="19" fill="#00ff00"/><rect x="731" y="204" width="5" height="6" fill="#00ff00"/><rect x="732" y="205" width="3" height="4" fill="#000"/><rect x="741" y="204" width="1" height="24" fill="#00ff00"/><rect x="739" y="204" width="5" height="22" fill="#00ff00"/><rect x="740" y="205" width="3" height="20" fill="#fff"/><rect x="749" y="206" width="1" height="22" fill="#00ff00"/><rect x="747" y="220" width="5" height="5" fill="#00ff00"/><rect x="748" y="221" width="3" height="3" fill="#000"/><rect x="757" y="214" width="1" height="24" fill="#00ff00"/><rect x="755" y="221" width="5" height="12" fill="#00ff00"/><rect x="756" y="222" width="3" height="10" fill="#000"/><rect x="765" y="198" width="1" height="29" fill="#00ff00"/><rect x="763" y="198" width="5" height="26" fill="#00ff00"/><rect x="764" y="199" width="3" height="24" fill="#000"/><rect x="773" y="175" width="1" height="28" fill="#00ff00"/><rect x="771" y="187" width="5" height="12" fill="#00ff00"/><rect x="772" y="188" width="3" height="10" fill="#000"/><rect x="781" y="184" width="1" height="49" fill="#00ff00"/><rect x="779" y="187" width="5" height="21" fill="#00ff00"/><rect x="780" y="188" width="3" height="19" fill="#fff"/><rect x="789" y="202" width="1" height="58" fill="#00ff00"/><rect x="787" y="206" width="5" height="1" fill="#00ff00"/><rect x="797" y="159" width="1" height="59" fill="#00ff00"/><rect x="795" y="180" width="5" height="28" fill="#00ff00"/><rect x="796" y="181" width="3" height="26" fill="#000"/><rect x="805" y="165" width="1" height="26" fill="#00ff00"/><rect x="803" y="179" width="5" height="6" fill="#00ff00"/><rect x="804" y="180" width="3" height="4" fill="#fff"/><rect x="813" y="163" width="1" height="26" fill="#00ff00"/><rect x="811" y="166" width="5" height="19" fill="#00ff00"/><rect x="812" y="167" width="3" height="17" fill="#000"/><rect x="821" y="126" width="1" height="48" fill="#00ff00"/><rect x="819" y="128" width="5" height="39" fill="#00ff00"/><rect x="820" y="129" width="3" height="37" fill="#000"/><rect x="829" y="99" width="1" height="44" fill="#00ff00"/><rect x="827" y="128" width="5" height="13" fill="#00ff00"/><rect x="828" y="129" width="3" height="11" fill="#fff"/><rect x="837" y="132" width="1" height="57" fill="#00ff00"/><rect x="835" y="140" width="5" height="22" fill="#00ff00"/><rect x="836" y="141" width="3" height="20" fill="#fff"/><rect x="845" y="159" width="1" height="60" fill="#00ff00"/><rect x="843" y="161" width="5" height="48" fill="#00ff00"/><rect x="844" y="162" width="3" height="46" fill="#fff"/><rect x="853" y="190" width="1" height="39" fill="#00ff00"/><rect x="851" y="191" width="5" height="18" fill="#00ff00"/><rect x="852" y="192" width="3" height="16" fill="#000"/><rect x="861" y="177" width="1" height="39" fill="#00ff00"/><rect x="859" y="191" width="5" height="14" fill="#00ff00"/><rect x="860" y="192" width="3" height="12" fill="#fff"/><rect x="869" y="160" width="1" height="60" fill="#00ff00"/><rect x="867" y="166" width="5" height="39" fill="#00ff00"/><rect x="868" y="167" width="3" height="37" fill="#000"/><rect x="877" y="157" width="1" height="37" fill="#00ff00"/><rect x="875" y="166" width="5" height="7" fill="#00ff00"/><rect x="876" y="167" width="3" height="5" fill="#fff"/><rect x="885" y="144" width="1" height="30" fill="#00ff00"/><rect x="883" y="151" width="5" height="22" fill="#00ff00"/><rect x="884" y="152" width="3" height="20" fill="#000"/><rect x="893" y="137" width="1" height="36" fill="#00ff00"/><rect x="891" y="151" width="5" height="14" fill="#00ff00"/><rect x="892" y="152" width="3" height="12" fill="#fff"/><rect x="901" y="158" width="1" height="46" fill="#00ff00"/><rect x="899" y="163" width="5" height="20" fill="#00ff00"/><rect x="900" y="164" width="3" height="18" fill="#fff"/><rect x="909" y="170" width="1" height="50" fill="#00ff00"/><rect x="907" y="174" width="5" height="9" fill="#00ff00"/><rect x="908" y="175" width="3" height="7" fill="#000"/><rect x="917" y="160" width="1" height="26" fill="#00ff00"/><rect x="915" y="174" width="5" height="3" fill="#00ff00"/><rect x="916" y="175" width="3" height="1" fill="#fff"/><rect x="925" y="172" width="1" height="22" fill="#00ff00"/><rect x="923" y="176" width="5" height="1" fill="#00ff00"/><rect x="933" y="165" width="1" height="29" fill="#00ff00"/><rect x="931" y="177" width="5" height="15" fill="#00ff00"/><rect x="932" y="178" width="3" height="13" fill="#fff"/><rect x="941" y="179" width="1" height="20" fill="#00ff00"/><rect x="939" y="186" width="5" height="5" fill="#00ff00"/><rect x="940" y="187" width="3" height="3" fill="#000"/><rect x="949" y="169" width="1" height="27" fill="#00ff00"/><rect x="947" y="180" width="5" height="9" fill="#00ff00"/><rect x="948" y="181" width="3" height="7" fill="#000"/><rect x="957" y="174" width="1" height="21" fill="#00ff00"/><rect x="955" y="175" width="5" height="6" fill="#00ff00"/><rect x="956" y="176" width="3" height="4" fill="#000"/><rect x="965" y="172" width="1" height="15" fill="#00ff00"/><rect x="963" y="176" width="5" height="9" fill="#00ff00"/><rect x="964" y="177" width="3" height="7" fill="#fff"/><rect x="973" y="141" width="1" height="46" fill="#00ff00"/><rect x="971" y="146" width="5" height="39" fill="#00ff00"/><rect x="972" y="147" width="3" height="37" fill="#000"/><rect x="981" y="141" width="1" height="32" fill="#00ff00"/><rect x="979" y="146" width="5" height="11" fill="#00ff00"/><rect x="980" y="147" width="3" height="9" fill="#fff"/><rect x="989" y="148" width="1" height="21" fill="#00ff00"/><rect x="987" y="151" width="5" height="6" fill="#00ff00"/><rect x="988" y="152" width="3" height="4" fill="#000"/><rect x="997" y="146" width="1" height="38" fill="#00ff00"/><rect x="995" y="150" width="5" height="23" fill="#00ff00"/><rect x="996" y="151" width="3" height="21" fill="#fff"/><rect x="1005" y="165" width="1" height="23" fill="#00ff00"/><rect x="1003" y="168" width="5" height="5" fill="#00ff00"/><rect x="1004" y="169" width="3" height="3" fill="#000"/><rect x="1013" y="160" width="1" height="11" fill="#00ff00"/><rect x="1011" y="166" width="5" height="1" fill="#00ff00"/><rect x="1021" y="159" width="1" height="27" fill="#00ff00"/><rect x="1019" y="164" width="5" height="7" fill="#00ff00"/><rect x="1020" y="165" width="3" height="5" fill="#fff"/><rect x="1029" y="128" width="1" height="43" fill="#00ff00"/><rect x="1027" y="137" width="5" height="33" fill="#00ff00"/><rect x="1028" y="138" width="3" height="31" fill="#000"/><rect x="1037" y="126" width="1" height="35" fill="#00ff00"/><rect x="1035" y="137" width="5" height="13" fill="#00ff00"/><rect x="1036" y="138" width="3" height="11" fill="#fff"/><rect x="1045" y="141" width="1" height="29" fill="#00ff00"/><rect x="1043" y="149" width="5" height="11" fill="#00ff00"/><rect x="1044" y="150" width="3" height="9" fill="#fff"/><rect x="1053" y="144" width="1" height="46" fill="#00ff00"/><rect x="1051" y="159" width="5" height="26" fill="#00ff00"/><rect x="1052" y="160" width="3" height="24" fill="#fff"/><rect x="1061" y="172" width="1" height="46" fill="#00ff00"/><rect x="1059" y="183" width="5" height="27" fill="#00ff00"/><rect x="1060" y="184" width="3" height="25" fill="#fff"/><rect x="1069" y="198" width="1" height="53" fill="#00ff00"/><rect x="1067" y="209" width="5" height="19" fill="#00ff00"/><rect x="1068" y="210" width="3" height="17" fill="#fff"/><rect x="1077" y="222" width="1" height="89" fill="#00ff00"/><rect x="1075" y="225" width="5" height="62" fill="#00ff00"/><rect x="1076" y="226" width="3" height="60" fill="#fff"/><rect x="1085" y="257" width="1" height="49" fill="#00ff00"/><rect x="1083" y="265" width="5" height="22" fill="#00ff00"/><rect x="1084" y="266" width="3" height="20" fill="#000"/><rect x="1093" y="199" width="1" height="74" fill="#00ff00"/><rect x="1091" y="224" width="5" height="43" fill="#00ff00"/><rect x="1092" y="225" width="3" height="41" fill="#000"/><rect x="1101" y="215" width="1" height="32" fill="#00ff00"/><rect x="1099" y="217" width="5" height="8" fill="#00ff00"/><rect x="1100" y="218" width="3" height="6" fill="#000"/><rect x="1109" y="216" width="1" height="43" fill="#00ff00"/><rect x="1107" y="218" width="5" height="7" fill="#00ff00"/><rect x="1108" y="219" width="3" height="5" fill="#fff"/><rect x="1117" y="224" width="1" height="23" fill="#00ff00"/><rect x="1115" y="224" width="5" height="7" fill="#00ff00"/><rect x="1116" y="225" width="3" height="5" fill="#fff"/><rect x="1125" y="224" width="1" height="20" fill="#00ff00"/><rect x="1123" y="230" width="5" height="4" fill="#00ff00"/><rect x="1124" y="231" width="3" height="2" fill="#fff"/><rect x="1133" y="215" width="1" height="28" fill="#00ff00"/><rect x="1131" y="234" width="5" height="3" fill="#00ff00"/><rect x="1132" y="235" width="3" height="1" fill="#fff"/><rect x="1141" y="222" width="1" height="21" fill="#00ff00"/><rect x="1139" y="228" width="5" height="10" fill="#00ff00"/><rect x="1140" y="229" width="3" height="8" fill="#000"/><rect x="1149" y="222" width="1" height="15" fill="#00ff00"/><rect x="1147" y="229" width="5" height="1" fill="#00ff00"/><rect x="1157" y="209" width="1" height="26" fill="#00ff00"/><rect x="1155" y="217" width="5" height="15" fill="#00ff00"/><rect x="1156" y="218" width="3" height="13" fill="#000"/><rect x="1165" y="180" width="1" height="46" fill="#00ff00"/><rect x="1163" y="184" width="5" height="36" fill="#00ff00"/><rect x="1164" y="185" width="3" height="34" fill="#000"/><rect x="1173" y="168" width="1" height="23" fill="#00ff00"/><rect x="1171" y="179" width="5" height="6" fill="#00ff00"/><rect x="1172" y="180" width="3" height="4" fill="#000"/><rect x="1181" y="173" width="1" height="27" fill="#00ff00"/><rect x="1179" y="180" width="5" height="14" fill="#00ff00"/><rect x="1180" y="181" width="3" height="12" fill="#fff"/><rect x="1189" y="189" width="1" height="19" fill="#00ff00"/><rect x="1187" y="195" width="5" height="1" fill="#00ff00"/><rect x="1197" y="180" width="1" height="23" fill="#00ff00"/><rect x="1195" y="186" width="5" height="10" fill="#00ff00"/><rect x="1196" y="187" width="3" height="8" fill="#000"/><rect x="1205" y="158" width="1" height="35" fill="#00ff00"/><rect x="1203" y="167" width="5" height="21" fill="#00ff00"/><rect x="1204" y="168" width="3" height="19" fill="#000"/><rect x="1213" y="154" width="1" height="48" fill="#00ff00"/><rect x="1211" y="166" width="5" height="24" fill="#00ff00"/><rect x="1212" y="167" width="3" height="22" fill="#fff"/><rect x="1221" y="167" width="1" height="25" fill="#00ff00"/><rect x="1219" y="171" width="5" height="20" fill="#00ff00"/><rect x="1220" y="172" width="3" height="18" fill="#000"/><rect x="1229" y="167" width="1" height="22" fill="#00ff00"/><rect x="1227" y="172" width="5" height="8" fill="#00ff00"/><rect x="1228" y="173" width="3" height="6" fill="#fff"/><rect x="1237" y="173" width="1" height="41" fill="#00ff00"/><rect x="1235" y="179" width="5" height="17" fill="#00ff00"/><rect x="1236" y="180" width="3" height="15" fill="#fff"/><rect x="1245" y="187" width="1" height="33" fill="#00ff00"/><rect x="1243" y="191" width="5" height="5" fill="#00ff00"/><rect x="1244" y="192" width="3" height="3" fill="#000"/><rect x="1253" y="146" width="1" height="50" fill="#00ff00"/><rect x="1251" y="163" width="5" height="28" fill="#00ff00"/><rect x="1252" y="164" width="3" height="26" fill="#000"/><rect x="1261" y="140" width="1" height="33" fill="#00ff00"/><rect x="1259" y="162" width="5" height="9" fill="#00ff00"/><rect x="1260" y="163" width="3" height="7" fill="#fff"/><rect x="1269" y="158" width="1" height="24" fill="#00ff00"/><rect x="1267" y="161" width="5" height="10" fill="#00ff00"/><rect x="1268" y="162" width="3" height="8" fill="#000"/><rect x="1277" y="147" width="1" height="38" fill="#00ff00"/><rect x="1275" y="149" width="5" height="14" fill="#00ff00"/><rect x="1276" y="150" width="3" height="12" fill="#000"/><rect x="1285" y="127" width="1" height="36" fill="#00ff00"/><rect x="1283" y="150" width="5" height="1" fill="#00ff00"/><rect x="1293" y="113" width="1" height="44" fill="#00ff00"/><rect x="1291" y="142" width="5" height="10" fill="#00ff00"/><rect x="1292" y="143" width="3" height="8" fill="#000"/><rect x="1301" y="127" width="1" height="22" fill="#00ff00"/><rect x="1299" y="142" width="5" height="3" fill="#00ff00"/><rect x="1300" y="143" width="3" height="1" fill="#fff"/><rect x="1309" y="155" width="1" height="151" fill="#00ff00"/><rect x="1307" y="162" width="5" height="120" fill="#00ff00"/><rect x="1308" y="163" width="3" height="118" fill="#fff"/><rect x="1317" y="266" width="1" height="55" fill="#00ff00"/><rect x="1315" y="270" width="5" height="12" fill="#00ff00"/><rect x="1316" y="271" width="3" height="10" fill="#000"/><rect x="1325" y="267" width="1" height="30" fill="#00ff00"/><rect x="1323" y="270" width="5" height="25" fill="#00ff00"/><rect x="1324" y="271" width="3" height="23" fill="#fff"/><rect x="1333" y="268" width="1" height="38" fill="#00ff00"/><rect x="1331" y="283" width="5" height="15" fill="#00ff00"/><rect x="1332" y="284" width="3" height="13" fill="#000"/><rect x="1341" y="276" width="1" height="59" fill="#00ff00"/><rect x="1339" y="278" width="5" height="4" fill="#00ff00"/><rect x="1340" y="279" width="3" height="2" fill="#000"/><rect x="1349" y="255" width="1" height="40" fill="#00ff00"/><rect x="1347" y="264" width="5" height="17" fill="#00ff00"/><rect x="1348" y="265" width="3" height="15" fill="#000"/><rect x="1357" y="238" width="1" height="29" fill="#00ff00"/><rect x="1355" y="243" width="5" height="22" fill="#00ff00"/><rect x="1356" y="244" width="3" height="20" fill="#000"/><rect x="1365" y="184" width="1" height="63" fill="#00ff00"/><rect x="1363" y="206" width="5" height="39" fill="#00ff00"/><rect x="1364" y="207" width="3" height="37" fill="#000"/><rect x="1373" y="195" width="1" height="21" fill="#00ff00"/><rect x="1371" y="202" width="5" height="5" fill="#00ff00"/><rect x="1372" y="203" width="3" height="3" fill="#000"/><rect x="1381" y="201" width="1" height="162" fill="#00ff00"/><rect x="1379" y="203" width="5" height="73" fill="#00ff00"/><rect x="1380" y="204" width="3" height="71" fill="#fff"/><rect x="1389" y="227" width="1" height="52" fill="#00ff00"/><rect x="1387" y="256" width="5" height="20" fill="#00ff00"/><rect x="1388" y="257" width="3" height="18" fill="#000"/><rect x="1397" y="248" width="1" height="39" fill="#00ff00"/><rect x="1395" y="255" width="5" height="22" fill="#00ff00"/><rect x="1396" y="256" width="3" height="20" fill="#fff"/><rect x="1405" y="258" width="1" height="40" fill="#00ff00"/><rect x="1403" y="275" width="5" height="6" fill="#00ff00"/><rect x="1404" y="276" width="3" height="4" fill="#fff"/><rect x="1413" y="121" width="1" height="170" fill="#00ff00"/><rect x="1411" y="154" width="5" height="126" fill="#00ff00"/><rect x="1412" y="155" width="3" height="124" fill="#000"/><rect x="1421" y="144" width="1" height="54" fill="#00ff00"/><rect x="1419" y="154" width="5" height="39" fill="#00ff00"/><rect x="1420" y="155" width="3" height="37" fill="#fff"/><rect x="1429" y="182" width="1" height="52" fill="#00ff00"/><rect x="1427" y="192" width="5" height="25" fill="#00ff00"/><rect x="1428" y="193" width="3" height="23" fill="#fff"/><rect x="1437" y="190" width="1" height="45" fill="#00ff00"/><rect x="1435" y="216" width="5" height="6" fill="#00ff00"/><rect x="1436" y="217" width="3" height="4" fill="#fff"/><rect x="1445" y="194" width="1" height="46" fill="#00ff00"/><rect x="1443" y="206" width="5" height="17" fill="#00ff00"/><rect x="1444" y="207" width="3" height="15" fill="#000"/><rect x="1453" y="182" width="1" height="36" fill="#00ff00"/><rect x="1451" y="191" width="5" height="16" fill="#00ff00"/><rect x="1452" y="192" width="3" height="14" fill="#000"/><rect x="1461" y="148" width="1" height="43" fill="#00ff00"/><rect x="1459" y="166" width="5" height="25" fill="#00ff00"/><rect x="1460" y="167" width="3" height="23" fill="#000"/><rect x="1469" y="156" width="1" height="68" fill="#00ff00"/><rect x="1467" y="166" width="5" height="43" fill="#00ff00"/><rect x="1468" y="167" width="3" height="41" fill="#fff"/><rect x="1477" y="202" width="1" height="43" fill="#00ff00"/><rect x="1475" y="207" width="5" height="34" fill="#00ff00"/><rect x="1476" y="208" width="3" height="32" fill="#fff"/><rect x="1485" y="234" width="1" height="25" fill="#00ff00"/><rect x="1483" y="240" width="5" height="6" fill="#00ff00"/><rect x="1484" y="241" width="3" height="4" fill="#fff"/><g fill="#fff" font-family="Liberation Sans, sans-serif" font-size="9.4px" shape-rendering="auto"><path d="M8 85h7l-3.5 4z" fill="#fff"/><text x="20" y="91" xml:space="preserve" style="white-space:pre">USDJPY,H1  108.961 108.975 108.911 108.948</text><text x="4" y="486">9 Mar 2021</text><text x="68" y="486">9 Mar 10:00</text><text x="132" y="486">9 Mar 18:00</text><text x="196" y="486">10 Mar 02:00</text><text x="260" y="486">10 Mar 10:00</text><text x="324" y="486">10 Mar 18:00</text><text x="388" y="486">11 Mar 02:00</text><text x="452" y="486">11 Mar 10:00</text><text x="516" y="486">11 Mar 18:00</text><text x="580" y="486">12 Mar 02:00</text><text x="644" y="486">12 Mar 10:00</text><text x="708" y="486">12 Mar 18:00</text><text x="772" y="486">15 Mar 01:00</text><text x="836" y="486">15 Mar 09:00</text><text x="900" y="486">15 Mar 17:00</text><text x="964" y="486">16 Mar 01:00</text><text x="1028" y="486">16 Mar 09:00</text><text x="1092" y="486">16 Mar 17:00</text><text x="1156" y="486">17 Mar 01:00</text><text x="1220" y="486">17 Mar 09:00</text><text x="1284" y="486">17 Mar 17:00</text><text x="1348" y="486">18 Mar 01:00</text><text x="1412" y="486">18 Mar 09:00</text><text x="1476" y="486">18 Mar 17:00</text><text x="1879" y="104" textLength="32">109.355</text><text x="1879" y="137" textLength="32">109.260</text><text x="1879" y="171" textLength="32">109.165</text><text x="1879" y="205" textLength="32">109.070</text><text x="1879" y="238" textLength="32">108.975</text><text x="1879" y="272" textLength="32">108.880</text><text x="1879" y="305" textLength="32">108.785</text><text x="1879" y="339" textLength="32">108.690</text><text x="1879" y="372" textLength="32">108.595</text><text x="1879" y="406" textLength="32">108.500</text><text x="1879" y="439" textLength="32">108.405</text><text x="1879" y="473" textLength="32">108.310</text><rect x="1873" y="239" width="43" height="11" fill="#fff" shape-rendering="crispEdges"/><text x="1879" y="248" fill="#000" textLength="32">108.948</text><text x="1807" y="93">EA  Pros X5</text><g fill="none" stroke="#fff" stroke-width="1"><circle cx="1861.5" cy="90" r="5"/><path d="M1859 91.5q2.5 2.5 5 0"/></g><rect x="1859" y="88" width="1.4" height="1.4"/><rect x="1862.6" y="88" width="1.4" height="1.4"/></g><g fill="#fff" font-family="DejaVu Sans, sans-serif" font-size="17px" text-anchor="end" letter-spacing="-0.3" shape-rendering="auto"><text x="1850" y="450">Third account</text><text x="1865" y="468">10 months results</text></g></svg>
</div>
<div class="hl" style="top:494px;height:2px;background:#f0f0f0"></div>
<div id="tabs">
<div class="hl" style="top:1px;background:#000"></div>
<span class="tab" style="left:17px">EURUSD,H1</span>
<span class="tab" style="left:101px">GBPUSD,H1</span>
<span class="tab" style="left:186px">USDCAD,H1</span>
<span class="tab" style="left:272px">USDCHF,H1</span>
<div class="vsep" style="left:90px;top:4px;height:14px;background:#707070"></div>
<div class="vsep" style="left:174px;top:4px;height:14px;background:#707070"></div>
<div class="vsep" style="left:262px;top:4px;height:14px;background:#707070"></div>
<div class="abs" style="left:0;top:2px;width:2px;height:18px;background:#808080"></div>
<div class="abs" style="left:346px;top:1px;width:80px;height:20px;background:#fff;border:1px solid #000;border-top:none"></div>
<span class="tab" style="left:357px;color:#000">USDJPY,H1</span>
<div class="abs" style="left:1887px;top:7px;width:0;height:0;border-top:3px solid transparent;border-bottom:3px solid transparent;border-right:4px solid #a0a0a0"></div>
<div class="abs" style="left:1907px;top:7px;width:0;height:0;border-top:3px solid transparent;border-bottom:3px solid transparent;border-left:4px solid #a0a0a0"></div>
<div class="hl" style="top:21px;height:4px;background:#fafafa"></div>
</div>
<div class="abs" style="left:1px;top:534px;width:13px;height:428px;background:linear-gradient(to right,#b9cbe0,#d3e0ef)"></div>
<svg class="abs" style="left:3px;top:522px" width="8" height="8" viewBox="0 0 8 8"><path d="M1 1l6 5M7 1L1 6" stroke="#000" stroke-width="1.600" fill="none"/></svg>
<div class="abs" style="left:0px;top:948px;width:14px;height:14px;font-size:12px;line-height:14px;transform:rotate(-90deg);transform-origin:7px 7px;white-space:nowrap;letter-spacing:-0.2px">nal</div>
<div id="tbl">
<div class="row hd" style="top:0;height:25px;border-bottom:1px solid #cacaca">
<div class="c" style="left:0px;width:167px;text-align:left;padding-left:6px">Order<span style="position:absolute;left:48px;top:0;font-size:9px;color:#555">/</span></div>
<div class="c" style="left:166px;width:284px;">Time</div>
<div class="c" style="left:449px;width:129px;">Type</div>
<div class="c" style="left:577px;width:104px;">Size</div>
<div class="c" style="left:680px;width:129px;">Symbol</div>
<div class="c" style="left:808px;width:129px;">Price</div>
<div class="c" style="left:936px;width:129px;">S / L</div>
<div class="c" style="left:1064px;width:129px;">T / P</div>
<div class="c" style="left:1192px;width:284px;">Time</div>
<div class="c" style="left:1475px;width:129px;">Price</div>
<div class="c" style="left:1603px;width:129px;">Swap</div>
<div class="c" style="left:1731px;width:152px;">Profit</div>
</div>
<div class="row" style="top:25px">
<div class="c" style="left:0px;width:166px;text-align:left;padding-left:22px;letter-spacing:-0.45px"><svg class="abs" style="left:3px;top:2px" width="16" height="16" viewBox="0 0 16 16"><path d="M1.500 1.500h6.500l3.500 3.500v8.500h-10z" fill="#fff" stroke="#5a6878"/><path d="M8 1.500v3.500h3.500" fill="#e8e8e8" stroke="#5a6878"/><circle cx="11" cy="12" r="3.300" fill="#e8441a" stroke="#b02a08" stroke-width="0.600"/><circle cx="10.200" cy="11" r="1" fill="#ff9a70" opacity="0.7"/></svg>110390870</div>
<div class="c" style="left:166px;width:283px;">2021.03.17 20:15:00</div>
<div class="c t" style="left:449px;width:128px;">sell</div>
<div class="c" style="left:577px;width:103px;">0.19</div>
<div class="c t" style="left:680px;width:128px;">gbpusd</div>
<div class="c" style="left:808px;width:128px;">1.39219</div>
<div class="c" style="left:936px;width:128px;"><div class="abs red" style="left:1px;top:0;right:1px;bottom:1px"></div><span style="position:relative">1.39385</span></div>
<div class="c" style="left:1064px;width:128px;">1.39196</div>
<div class="c" style="left:1192px;width:283px;">2021.03.18 14:25:34</div>
<div class="c" style="left:1475px;width:128px;">1.39387</div>
<div class="c" style="left:1603px;width:128px;">-1.72</div>
<div class="c" style="left:1731px;width:151px;border-right:none;padding-right:3px">-26.76</div>
</div>
<div class="row alt" style="top:45px">
<div class="c" style="left:0px;width:166px;text-align:left;padding-left:22px;letter-spacing:-0.45px"><svg class="abs" style="left:3px;top:2px" width="16" height="16" viewBox="0 0 16 16"><path d="M1.500 1.500h6.500l3.500 3.500v8.500h-10z" fill="#fff" stroke="#5a6878"/><path d="M8 1.500v3.500h3.500" fill="#e8e8e8" stroke="#5a6878"/><circle cx="11" cy="12" r="3.300" fill="#2b8fe6" stroke="#1563b0" stroke-width="0.600"/><circle cx="10.200" cy="11" r="1" fill="#9ad0ff" opacity="0.7"/></svg>110391472</div>
<div class="c" style="left:166px;width:283px;">2021.03.17 20:25:03</div>
<div class="c t" style="left:449px;width:128px;">buy</div>
<div class="c" style="left:577px;width:103px;">0.12</div>
<div class="c t" style="left:680px;width:128px;">gbpusd</div>
<div class="c" style="left:808px;width:128px;">1.39226</div>
<div class="c" style="left:936px;width:128px;">1.39351</div>
<div class="c" style="left:1064px;width:128px;"><div class="abs grn" style="left:1px;top:0;right:1px;bottom:1px"></div><span style="position:relative">1.39436</span></div>
<div class="c" style="left:1192px;width:283px;">2021.03.17 20:43:50</div>
<div class="c" style="left:1475px;width:128px;">1.39438</div>
<div class="c" style="left:1603px;width:128px;">0.00</div>
<div class="c" style="left:1731px;width:151px;border-right:none;padding-right:3px">21.24</div>
</div>
<div class="row" style="top:65px">
<div class="c" style="left:0px;width:166px;text-align:left;padding-left:22px;letter-spacing:-0.45px"><svg class="abs" style="left:3px;top:2px" width="16" height="16" viewBox="0 0 16 16"><path d="M1.500 1.500h6.500l3.500 3.500v8.500h-10z" fill="#fff" stroke="#5a6878"/><path d="M8 1.500v3.500h3.500" fill="#e8e8e8" stroke="#5a6878"/><circle cx="11" cy="12" r="3.300" fill="#2b8fe6" stroke="#1563b0" stroke-width="0.600"/><circle cx="10.200" cy="11" r="1" fill="#9ad0ff" opacity="0.7"/></svg>110391473</div>
<div class="c" style="left:166px;width:283px;">2021.03.17 20:25:03</div>
<div class="c t" style="left:449px;width:128px;">buy</div>
<div class="c" style="left:577px;width:103px;">0.12</div>
<div class="c t" style="left:680px;width:128px;">eurusd</div>
<div class="c" style="left:808px;width:128px;">1.19627</div>
<div class="c" style="left:936px;width:128px;">1.19736</div>
<div class="c" style="left:1064px;width:128px;"><div class="abs grn" style="left:1px;top:0;right:1px;bottom:1px"></div><span style="position:relative">1.19837</span></div>
<div class="c" style="left:1192px;width:283px;">2021.03.17 20:45:53</div>
<div class="c" style="left:1475px;width:128px;">1.19837</div>
<div class="c" style="left:1603px;width:128px;">0.00</div>
<div class="c" style="left:1731px;width:151px;border-right:none;padding-right:3px">21.03</div>
</div>
<div class="row alt" style="top:85px">
<div class="c" style="left:0px;width:166px;text-align:left;padding-left:22px;letter-spacing:-0.45px"><svg class="abs" style="left:3px;top:2px" width="16" height="16" viewBox="0 0 16 16"><path d="M1.500 1.500h6.500l3.500 3.500v8.500h-10z" fill="#fff" stroke="#5a6878"/><path d="M8 1.500v3.500h3.500" fill="#e8e8e8" stroke="#5a6878"/><circle cx="11" cy="12" r="3.300" fill="#e8441a" stroke="#b02a08" stroke-width="0.600"/><circle cx="10.200" cy="11" r="1" fill="#ff9a70" opacity="0.7"/></svg>110391474</div>
<div class="c" style="left:166px;width:283px;">2021.03.17 20:25:03</div>
<div class="c t" style="left:449px;width:128px;">sell</div>
<div class="c" style="left:577px;width:103px;">0.12</div>
<div class="c t" style="left:680px;width:128px;">usdcad</div>
<div class="c" style="left:808px;width:128px;">1.24354</div>
<div class="c" style="left:936px;width:128px;">1.24235</div>
<div class="c" style="left:1064px;width:128px;"><div class="abs grn" style="left:1px;top:0;right:1px;bottom:1px"></div><span style="position:relative">1.24144</span></div>
<div class="c" style="left:1192px;width:283px;">2021.03.17 20:44:13</div>
<div class="c" style="left:1475px;width:128px;">1.24142</div>
<div class="c" style="left:1603px;width:128px;">0.00</div>
<div class="c" style="left:1731px;width:151px;border-right:none;padding-right:3px">17.10</div>
</div>
<div class="row" style="top:105px">
<div class="c" style="left:0px;width:166px;text-align:left;padding-left:22px;letter-spacing:-0.45px"><svg class="abs" style="left:3px;top:2px" width="16" height="16" viewBox="0 0 16 16"><path d="M1.500 1.500h6.500l3.500 3.500v8.500h-10z" fill="#fff" stroke="#5a6878"/><path d="M8 1.500v3.500h3.500" fill="#e8e8e8" stroke="#5a6878"/><circle cx="11" cy="12" r="3.300" fill="#e8441a" stroke="#b02a08" stroke-width="0.600"/><circle cx="10.200" cy="11" r="1" fill="#ff9a70" opacity="0.7"/></svg>110393050</div>
<div class="c" style="left:166px;width:283px;">2021.03.17 20:45:01</div>
<div class="c t" style="left:449px;width:128px;">sell</div>
<div class="c" style="left:577px;width:103px;">0.12</div>
<div class="c t" style="left:680px;width:128px;">usdcad</div>
<div class="c" style="left:808px;width:128px;">1.24129</div>
<div class="c" style="left:936px;width:128px;"><div class="abs red" style="left:1px;top:0;right:1px;bottom:1px"></div><span style="position:relative">1.24097</span></div>
<div class="c" style="left:1064px;width:128px;">1.23919</div>
<div class="c" style="left:1192px;width:283px;">2021.03.17 22:59:56</div>
<div class="c" style="left:1475px;width:128px;">1.24097</div>
<div class="c" style="left:1603px;width:128px;">0.00</div>
<div class="c" style="left:1731px;width:151px;border-right:none;padding-right:3px">2.58</div>
</div>
<div class="row alt" style="top:125px">
<div class="c" style="left:0px;width:166px;text-align:left;padding-left:22px;letter-spacing:-0.45px"><svg class="abs" style="left:3px;top:2px" width="16" height="16" viewBox="0 0 16 16"><path d="M1.500 1.500h6.500l3.500 3.500v8.500h-10z" fill="#fff" stroke="#5a6878"/><path d="M8 1.500v3.500h3.500" fill="#e8e8e8" stroke="#5a6878"/><circle cx="11" cy="12" r="3.300" fill="#2b8fe6" stroke="#1563b0" stroke-width="0.600"/><circle cx="10.200" cy="11" r="1" fill="#9ad0ff" opacity="0.7"/></svg>110393051</div>
<div class="c" style="left:166px;width:283px;">2021.03.17 20:45:01</div>
<div class="c t" style="left:449px;width:128px;">buy</div>
<div class="c" style="left:577px;width:103px;">0.12</div>
<div class="c t" style="left:680px;width:128px;">gbpusd</div>
<div class="c" style="left:808px;width:128px;">1.39459</div>
<div class="c" style="left:936px;width:128px;"><div class="abs red" style="left:1px;top:0;right:1px;bottom:1px"></div><span style="position:relative">1.39547</span></div>
<div class="c" style="left:1064px;width:128px;">1.39669</div>
<div class="c" style="left:1192px;width:283px;">2021.03.17 21:37:02</div>
<div class="c" style="left:1475px;width:128px;">1.39547</div>
<div class="c" style="left:1603px;width:128px;">0.00</div>
<div class="c" style="left:1731px;width:151px;border-right:none;padding-right:3px">8.82</div>
</div>
<div class="row" style="top:145px">
<div class="c" style="left:0px;width:166px;text-align:left;padding-left:22px;letter-spacing:-0.45px"><svg class="abs" style="left:3px;top:2px" width="16" height="16" viewBox="0 0 16 16"><path d="M1.500 1.500h6.500l3.500 3.500v8.500h-10z" fill="#fff" stroke="#5a6878"/><path d="M8 1.500v3.500h3.500" fill="#e8e8e8" stroke="#5a6878"/><circle cx="11" cy="12" r="3.300" fill="#2b8fe6" stroke="#1563b0" stroke-width="0.600"/><circle cx="10.200" cy="11" r="1" fill="#9ad0ff" opacity="0.7"/></svg>110393515</div>
<div class="c" style="left:166px;width:283px;">2021.03.17 20:55:00</div>
<div class="c t" style="left:449px;width:128px;">buy</div>
<div class="c" style="left:577px;width:103px;">0.12</div>
<div class="c t" style="left:680px;width:128px;">eurusd</div>
<div class="c" style="left:808px;width:128px;">1.19790</div>
<div class="c" style="left:936px;width:128px;"><div class="abs red" style="left:1px;top:0;right:1px;bottom:1px"></div><span style="position:relative">1.19790</span></div>
<div class="c" style="left:1064px;width:128px;">1.20000</div>
<div class="c" style="left:1192px;width:283px;">2021.03.18 03:14:32</div>
<div class="c" style="left:1475px;width:128px;">1.19790</div>
<div class="c" style="left:1603px;width:128px;">-1.66</div>
<div class="c" style="left:1731px;width:151px;border-right:none;padding-right:3px">0.00</div>
</div>
<div class="row alt" style="top:165px">
<div class="c" style="left:0px;width:166px;text-align:left;padding-left:22px;letter-spacing:-0.45px"><svg class="abs" style="left:3px;top:2px" width="16" height="16" viewBox="0 0 16 16"><path d="M1.500 1.500h6.500l3.500 3.500v8.500h-10z" fill="#fff" stroke="#5a6878"/><path d="M8 1.500v3.500h3.500" fill="#e8e8e8" stroke="#5a6878"/><circle cx="11" cy="12" r="3.300" fill="#2b8fe6" stroke="#1563b0" stroke-width="0.600"/><circle cx="10.200" cy="11" r="1" fill="#9ad0ff" opacity="0.7"/></svg>110395431</div>
<div class="c" style="left:166px;width:283px;">2021.03.17 21:45:00</div>
<div class="c t" style="left:449px;width:128px;">buy</div>
<div class="c" style="left:577px;width:103px;">0.12</div>
<div class="c t" style="left:680px;width:128px;">gbpusd</div>
<div class="c" style="left:808px;width:128px;">1.39590</div>
<div class="c" style="left:936px;width:128px;"><div class="abs red" style="left:1px;top:0;right:1px;bottom:1px"></div><span style="position:relative">1.39594</span></div>
<div class="c" style="left:1064px;width:128px;">1.39800</div>
<div class="c" style="left:1192px;width:283px;">2021.03.17 22:16:25</div>
<div class="c" style="left:1475px;width:128px;">1.39591</div>
<div class="c" style="left:1603px;width:128px;">0.00</div>
<div class="c" style="left:1731px;width:151px;border-right:none;padding-right:3px">0.10</div>
</div>
<div class="row" style="top:185px">
<div class="c" style="left:0px;width:166px;text-align:left;padding-left:22px;letter-spacing:-0.45px"><svg class="abs" style="left:3px;top:2px" width="16" height="16" viewBox="0 0 16 16"><path d="M1.500 1.500h6.500l3.500 3.500v8.500h-10z" fill="#fff" stroke="#5a6878"/><path d="M8 1.500v3.500h3.500" fill="#e8e8e8" stroke="#5a6878"/><circle cx="11" cy="12" r="3.300" fill="#2b8fe6" stroke="#1563b0" stroke-width="0.600"/><circle cx="10.200" cy="11" r="1" fill="#9ad0ff" opacity="0.7"/></svg>110396762</div>
<div class="c" style="left:166px;width:283px;">2021.03.17 22:25:17</div>
<div class="c t" style="left:449px;width:128px;">buy</div>
<div class="c" style="left:577px;width:103px;">0.12</div>
<div class="c t" style="left:680px;width:128px;">gbpusd</div>
<div class="c" style="left:808px;width:128px;">1.39619</div>
<div class="c" style="left:936px;width:128px;"><div class="abs red" style="left:1px;top:0;right:1px;bottom:1px"></div><span style="position:relative">1.39653</span></div>
<div class="c" style="left:1064px;width:128px;">1.39877</div>
<div class="c" style="left:1192px;width:283px;">2021.03.18 00:47:14</div>
<div class="c" style="left:1475px;width:128px;">1.39649</div>
<div class="c" style="left:1603px;width:128px;">-1.21</div>
<div class="c" style="left:1731px;width:151px;border-right:none;padding-right:3px">3.00</div>
</div>
<div class="row alt" style="top:205px">
<div class="c" style="left:0px;width:166px;text-align:left;padding-left:22px;letter-spacing:-0.45px"><svg class="abs" style="left:3px;top:2px" width="16" height="16" viewBox="0 0 16 16"><path d="M1.500 1.500h6.500l3.500 3.500v8.500h-10z" fill="#fff" stroke="#5a6878"/><path d="M8 1.500v3.500h3.500" fill="#e8e8e8" stroke="#5a6878"/><circle cx="11" cy="12" r="3.300" fill="#e8441a" stroke="#b02a08" stroke-width="0.600"/><circle cx="10.200" cy="11" r="1" fill="#ff9a70" opacity="0.7"/></svg>110399701</div>
<div class="c" style="left:166px;width:283px;">2021.03.18 00:25:00</div>
<div class="c t" style="left:449px;width:128px;">sell</div>
<div class="c" style="left:577px;width:103px;">0.12</div>
<div class="c t" style="left:680px;width:128px;">usdcad</div>
<div class="c" style="left:808px;width:128px;">1.24013</div>
<div class="c" style="left:936px;width:128px;">1.23884</div>
<div class="c" style="left:1064px;width:128px;"><div class="abs grn" style="left:1px;top:0;right:1px;bottom:1px"></div><span style="position:relative">1.23803</span></div>
<div class="c" style="left:1192px;width:283px;">2021.03.18 02:18:16</div>
<div class="c" style="left:1475px;width:128px;">1.23800</div>
<div class="c" style="left:1603px;width:128px;">0.00</div>
<div class="c" style="left:1731px;width:151px;border-right:none;padding-right:3px">17.23</div>
</div>
<div class="row" style="top:225px">
<div class="c" style="left:0px;width:166px;text-align:left;padding-left:22px;letter-spacing:-0.45px"><svg class="abs" style="left:3px;top:2px" width="16" height="16" viewBox="0 0 16 16"><path d="M1.500 1.500h6.500l3.500 3.500v8.500h-10z" fill="#fff" stroke="#5a6878"/><path d="M8 1.500v3.500h3.500" fill="#e8e8e8" stroke="#5a6878"/><circle cx="11" cy="12" r="3.300" fill="#2b8fe6" stroke="#1563b0" stroke-width="0.600"/><circle cx="10.200" cy="11" r="1" fill="#9ad0ff" opacity="0.7"/></svg>110401251</div>
<div class="c" style="left:166px;width:283px;">2021.03.18 01:05:04</div>
<div class="c t" style="left:449px;width:128px;">buy</div>
<div class="c" style="left:577px;width:103px;">0.12</div>
<div class="c t" style="left:680px;width:128px;">gbpusd</div>
<div class="c" style="left:808px;width:128px;">1.39692</div>
<div class="c" style="left:936px;width:128px;">1.39814</div>
<div class="c" style="left:1064px;width:128px;"><div class="abs grn" style="left:1px;top:0;right:1px;bottom:1px"></div><span style="position:relative">1.39902</span></div>
<div class="c" style="left:1192px;width:283px;">2021.03.18 08:51:43</div>
<div class="c" style="left:1475px;width:128px;">1.39902</div>
<div class="c" style="left:1603px;width:128px;">0.00</div>
<div class="c" style="left:1731px;width:151px;border-right:none;padding-right:3px">21.04</div>
</div>
<div class="row alt" style="top:245px">
<div class="c" style="left:0px;width:166px;text-align:left;padding-left:22px;letter-spacing:-0.45px"><svg class="abs" style="left:3px;top:2px" width="16" height="16" viewBox="0 0 16 16"><path d="M1.500 1.500h6.500l3.500 3.500v8.500h-10z" fill="#fff" stroke="#5a6878"/><path d="M8 1.500v3.500h3.500" fill="#e8e8e8" stroke="#5a6878"/><circle cx="11" cy="12" r="3.300" fill="#2b8fe6" stroke="#1563b0" stroke-width="0.600"/><circle cx="10.200" cy="11" r="1" fill="#9ad0ff" opacity="0.7"/></svg>110407923</div>
<div class="c" style="left:166px;width:283px;">2021.03.18 04:10:01</div>
<div class="c t" style="left:449px;width:128px;">buy</div>
<div class="c" style="left:577px;width:103px;">0.12</div>
<div class="c t" style="left:680px;width:128px;">eurusd</div>
<div class="c" style="left:808px;width:128px;">1.19686</div>
<div class="c" style="left:936px;width:128px;"><div class="abs red" style="left:1px;top:0;right:1px;bottom:1px"></div><span style="position:relative">1.19799</span></div>
<div class="c" style="left:1064px;width:128px;">1.19896</div>
<div class="c" style="left:1192px;width:283px;">2021.03.18 09:21:33</div>
<div class="c" style="left:1475px;width:128px;">1.19799</div>
<div class="c" style="left:1603px;width:128px;">0.00</div>
<div class="c" style="left:1731px;width:151px;border-right:none;padding-right:3px">11.32</div>
</div>
<div class="row" style="top:265px">
<div class="c" style="left:0px;width:166px;text-align:left;padding-left:22px;letter-spacing:-0.45px"><svg class="abs" style="left:3px;top:2px" width="16" height="16" viewBox="0 0 16 16"><path d="M1.500 1.500h6.500l3.500 3.500v8.500h-10z" fill="#fff" stroke="#5a6878"/><path d="M8 1.500v3.500h3.500" fill="#e8e8e8" stroke="#5a6878"/><circle cx="11" cy="12" r="3.300" fill="#e8441a" stroke="#b02a08" stroke-width="0.600"/><circle cx="10.200" cy="11" r="1" fill="#ff9a70" opacity="0.7"/></svg>110407924</div>
<div class="c" style="left:166px;width:283px;">2021.03.18 04:10:01</div>
<div class="c t" style="left:449px;width:128px;">sell</div>
<div class="c" style="left:577px;width:103px;">0.12</div>
<div class="c t" style="left:680px;width:128px;">usdcad</div>
<div class="c" style="left:808px;width:128px;">1.23923</div>
<div class="c" style="left:936px;width:128px;">1.23852</div>
<div class="c" style="left:1064px;width:128px;"><div class="abs grn" style="left:1px;top:0;right:1px;bottom:1px"></div><span style="position:relative">1.23713</span></div>
<div class="c" style="left:1192px;width:283px;">2021.03.18 09:04:40</div>
<div class="c" style="left:1475px;width:128px;">1.23709</div>
<div class="c" style="left:1603px;width:128px;">0.00</div>
<div class="c" style="left:1731px;width:151px;border-right:none;padding-right:3px">17.32</div>
</div>
<div class="row alt" style="top:285px">
<div class="c" style="left:0px;width:166px;text-align:left;padding-left:22px;letter-spacing:-0.45px"><svg class="abs" style="left:3px;top:2px" width="16" height="16" viewBox="0 0 16 16"><path d="M1.500 1.500h6.500l3.500 3.500v8.500h-10z" fill="#fff" stroke="#5a6878"/><path d="M8 1.500v3.500h3.500" fill="#e8e8e8" stroke="#5a6878"/><circle cx="11" cy="12" r="3.300" fill="#e8441a" stroke="#b02a08" stroke-width="0.600"/><circle cx="10.200" cy="11" r="1" fill="#ff9a70" opacity="0.7"/></svg>110415043</div>
<div class="c" style="left:166px;width:283px;">2021.03.18 08:45:00</div>
<div class="c t" style="left:449px;width:128px;">sell</div>
<div class="c" style="left:577px;width:103px;">0.30</div>
<div class="c t" style="left:680px;width:128px;">gbpusd</div>
<div class="c" style="left:808px;width:128px;">1.39822</div>
<div class="c" style="left:936px;width:128px;"><div class="abs red" style="left:1px;top:0;right:1px;bottom:1px"></div><span style="position:relative">1.39385</span></div>
<div class="c" style="left:1064px;width:128px;">1.39196</div>
<div class="c" style="left:1192px;width:283px;">2021.03.18 14:25:34</div>
<div class="c" style="left:1475px;width:128px;">1.39387</div>
<div class="c" style="left:1603px;width:128px;">0.00</div>
<div class="c" style="left:1731px;width:151px;border-right:none;padding-right:3px">109.37</div>
</div>
<div class="row" style="top:305px">
<div class="c" style="left:0px;width:166px;text-align:left;padding-left:22px;letter-spacing:-0.45px"><svg class="abs" style="left:3px;top:2px" width="16" height="16" viewBox="0 0 16 16"><path d="M1.500 1.500h6.500l3.500 3.500v8.500h-10z" fill="#fff" stroke="#5a6878"/><path d="M8 1.500v3.500h3.500" fill="#e8e8e8" stroke="#5a6878"/><circle cx="11" cy="12" r="3.300" fill="#2b8fe6" stroke="#1563b0" stroke-width="0.600"/><circle cx="10.200" cy="11" r="1" fill="#9ad0ff" opacity="0.7"/></svg>110415744</div>
<div class="c" style="left:166px;width:283px;">2021.03.18 08:55:01</div>
<div class="c t" style="left:449px;width:128px;">buy</div>
<div class="c" style="left:577px;width:103px;">0.12</div>
<div class="c t" style="left:680px;width:128px;">gbpusd</div>
<div class="c" style="left:808px;width:128px;">1.39906</div>
<div class="c" style="left:936px;width:128px;"><div class="abs red" style="left:1px;top:0;right:1px;bottom:1px"></div><span style="position:relative">1.39924</span></div>
<div class="c" style="left:1064px;width:128px;">1.40116</div>
<div class="c" style="left:1192px;width:283px;">2021.03.18 09:15:35</div>
<div class="c" style="left:1475px;width:128px;">1.39924</div>
<div class="c" style="left:1603px;width:128px;">0.00</div>
<div class="c" style="left:1731px;width:151px;border-right:none;padding-right:3px">1.80</div>
</div>
<div class="row alt" style="top:325px">
<div class="c" style="left:0px;width:166px;text-align:left;padding-left:22px;letter-spacing:-0.45px"><svg class="abs" style="left:3px;top:2px" width="16" height="16" viewBox="0 0 16 16"><path d="M1.500 1.500h6.500l3.500 3.500v8.500h-10z" fill="#fff" stroke="#5a6878"/><path d="M8 1.500v3.500h3.500" fill="#e8e8e8" stroke="#5a6878"/><circle cx="11" cy="12" r="3.300" fill="#2b8fe6" stroke="#1563b0" stroke-width="0.600"/><circle cx="10.200" cy="11" r="1" fill="#9ad0ff" opacity="0.7"/></svg>110419630</div>
<div class="c" style="left:166px;width:283px;">2021.03.18 09:55:01</div>
<div class="c t" style="left:449px;width:128px;">buy</div>
<div class="c" style="left:577px;width:103px;">0.12</div>
<div class="c t" style="left:680px;width:128px;">gbpusd</div>
<div class="c" style="left:808px;width:128px;">1.39561</div>
<div class="c" style="left:936px;width:128px;"><div class="abs red" style="left:1px;top:0;right:1px;bottom:1px"></div><span style="position:relative">1.39652</span></div>
<div class="c" style="left:1064px;width:128px;">1.39771</div>
<div class="c" style="left:1192px;width:283px;">2021.03.18 10:09:38</div>
<div class="c" style="left:1475px;width:128px;">1.39652</div>
<div class="c" style="left:1603px;width:128px;">0.00</div>
<div class="c" style="left:1731px;width:151px;border-right:none;padding-right:3px">9.14</div>
</div>
<div class="row" style="top:345px">
<div class="c" style="left:0px;width:166px;text-align:left;padding-left:22px;letter-spacing:-0.45px"><svg class="abs" style="left:3px;top:2px" width="16" height="16" viewBox="0 0 16 16"><path d="M1.500 1.500h6.500l3.500 3.500v8.500h-10z" fill="#fff" stroke="#5a6878"/><path d="M8 1.500v3.500h3.500" fill="#e8e8e8" stroke="#5a6878"/><circle cx="11" cy="12" r="3.300" fill="#2b8fe6" stroke="#1563b0" stroke-width="0.600"/><circle cx="10.200" cy="11" r="1" fill="#9ad0ff" opacity="0.7"/></svg>110419631</div>
<div class="c" style="left:166px;width:283px;">2021.03.18 09:55:01</div>
<div class="c t" style="left:449px;width:128px;">buy</div>
<div class="c" style="left:577px;width:103px;">0.12</div>
<div class="c t" style="left:680px;width:128px;">eurusd</div>
<div class="c" style="left:808px;width:128px;">1.19466</div>
<div class="c" style="left:936px;width:128px;"><div class="abs red" style="left:1px;top:0;right:1px;bottom:1px"></div><span style="position:relative">1.19468</span></div>
<div class="c" style="left:1064px;width:128px;">1.19676</div>
<div class="c" style="left:1192px;width:283px;">2021.03.18 10:43:23</div>
<div class="c" style="left:1475px;width:128px;">1.19468</div>
<div class="c" style="left:1603px;width:128px;">0.00</div>
<div class="c" style="left:1731px;width:151px;border-right:none;padding-right:3px">0.20</div>
</div>
<div class="row alt" style="top:365px">
<div class="c" style="left:0px;width:166px;text-align:left;padding-left:22px;letter-spacing:-0.45px"><svg class="abs" style="left:3px;top:2px" width="16" height="16" viewBox="0 0 16 16"><path d="M1.500 1.500h6.500l3.500 3.500v8.500h-10z" fill="#fff" stroke="#5a6878"/><path d="M8 1.500v3.500h3.500" fill="#e8e8e8" stroke="#5a6878"/><circle cx="11" cy="12" r="3.300" fill="#2b8fe6" stroke="#1563b0" stroke-width="0.600"/><circle cx="10.200" cy="11" r="1" fill="#9ad0ff" opacity="0.7"/></svg>110421190</div>
<div class="c" style="left:166px;width:283px;">2021.03.18 10:15:01</div>
<div class="c t" style="left:449px;width:128px;">buy</div>
<div class="c" style="left:577px;width:103px;">0.12</div>
<div class="c t" style="left:680px;width:128px;">gbpusd</div>
<div class="c" style="left:808px;width:128px;">1.39714</div>
<div class="c" style="left:936px;width:128px;">1.39804</div>
<div class="c" style="left:1064px;width:128px;"><div class="abs grn" style="left:1px;top:0;right:1px;bottom:1px"></div><span style="position:relative">1.39924</span></div>
<div class="c" style="left:1192px;width:283px;">2021.03.18 13:00:22</div>
<div class="c" style="left:1475px;width:128px;">1.39926</div>
<div class="c" style="left:1603px;width:128px;">0.00</div>
<div class="c" style="left:1731px;width:151px;border-right:none;padding-right:3px">21.30</div>
</div>
<div class="row" style="top:385px">
<div class="c" style="left:0px;width:166px;text-align:left;padding-left:22px;letter-spacing:-0.45px"><svg class="abs" style="left:3px;top:2px" width="16" height="16" viewBox="0 0 16 16"><path d="M1.500 1.500h6.500l3.500 3.500v8.500h-10z" fill="#fff" stroke="#5a6878"/><path d="M8 1.500v3.500h3.500" fill="#e8e8e8" stroke="#5a6878"/><circle cx="11" cy="12" r="3.300" fill="#e8441a" stroke="#b02a08" stroke-width="0.600"/><circle cx="10.200" cy="11" r="1" fill="#ff9a70" opacity="0.7"/></svg>110438830</div>
<div class="c" style="left:166px;width:283px;">2021.03.18 14:30:01</div>
<div class="c t" style="left:449px;width:128px;">sell</div>
<div class="c" style="left:577px;width:103px;">0.12</div>
<div class="c t" style="left:680px;width:128px;">gbpusd</div>
<div class="c" style="left:808px;width:128px;">1.39391</div>
<div class="c" style="left:936px;width:128px;"><div class="abs red" style="left:1px;top:0;right:1px;bottom:1px"></div><span style="position:relative">1.39307</span></div>
<div class="c" style="left:1064px;width:128px;">1.39181</div>
<div class="c" style="left:1192px;width:283px;">2021.03.18 14:46:24</div>
<div class="c" style="left:1475px;width:128px;">1.39307</div>
<div class="c" style="left:1603px;width:128px;">0.00</div>
<div class="c" style="left:1731px;width:151px;border-right:none;padding-right:3px">8.45</div>
</div>
<div class="row alt" style="top:405px">
<div class="c" style="left:0px;width:166px;text-align:left;padding-left:22px;letter-spacing:-0.45px"><svg class="abs" style="left:3px;top:2px" width="16" height="16" viewBox="0 0 16 16"><path d="M1.500 1.500h6.500l3.500 3.500v8.500h-10z" fill="#fff" stroke="#5a6878"/><path d="M8 1.500v3.500h3.500" fill="#e8e8e8" stroke="#5a6878"/><circle cx="11" cy="12" r="3.300" fill="#e8441a" stroke="#b02a08" stroke-width="0.600"/><circle cx="10.200" cy="11" r="1" fill="#ff9a70" opacity="0.7"/></svg>110445833</div>
<div class="c" style="left:166px;width:283px;">2021.03.18 15:15:01</div>
<div class="c t" style="left:449px;width:128px;">sell</div>
<div class="c" style="left:577px;width:103px;">0.12</div>
<div class="c t" style="left:680px;width:128px;">gbpusd</div>
<div class="c" style="left:808px;width:128px;">1.39183</div>
<div class="c" style="left:936px;width:128px;"><div class="abs red" style="left:1px;top:0;right:1px;bottom:1px"></div><span style="position:relative">1.39066</span></div>
<div class="c" style="left:1064px;width:128px;">1.38973</div>
<div class="c" style="left:1192px;width:283px;">2021.03.18 16:02:22</div>
<div class="c" style="left:1475px;width:128px;">1.39066</div>
<div class="c" style="left:1603px;width:128px;">0.00</div>
<div class="c" style="left:1731px;width:151px;border-right:none;padding-right:3px">11.78</div>
</div>
<div class="abs" style="left:0;top:425px;width:1883px;height:17px;background:#c8c8c8;font-weight:bold;font-size:12px;letter-spacing:0px;line-height:16px;white-space:nowrap">
<span class="abs" style="left:6px;top:4px;width:8px;height:8px;border-radius:50%;border:1.5px solid #8a8a8a;background:#d8d8d8"></span>
<span class="abs" style="left:22px;top:1px;word-spacing:0px">Profit/Loss: 24 618.04&nbsp; Credit: 0.00&nbsp; Deposit: 30 000.00&nbsp; Withdrawal: 0.00</span>
<span class="abs" style="right:4px;top:1px">54 618.04</span>
</div>
<div class="abs" style="left:673px;top:162px;font-family:'DejaVu Sans',sans-serif;font-size:96px;letter-spacing:1.5px;line-height:112px;color:#fff;white-space:nowrap;height:92px;overflow:hidden;font-weight:400">EA PROS X5</div>
</div>
<div class="abs" style="left:1899px;top:520px;width:18px;height:442px;background:#f0f0f0;border-top:1px solid #a0a0a0"></div><div class="abs" style="left:1917px;top:520px;width:1px;height:442px;background:#fafafa"></div>
<svg class="abs" style="left:1903px;top:527px" width="10" height="6" viewBox="0 0 10 6"><path d="M1 5l4-4 4 4" stroke="#505050" stroke-width="1.6" fill="none"/></svg>
<svg class="abs" style="left:1903px;top:958px" width="10" height="6" viewBox="0 0 10 6"><path d="M1 1l4 4 4-4" stroke="#505050" stroke-width="1.6" fill="none"/></svg>
<div class="abs" style="left:1900px;top:935px;width:15px;height:17px;background:#cdcdcd"></div>
</body></html>
